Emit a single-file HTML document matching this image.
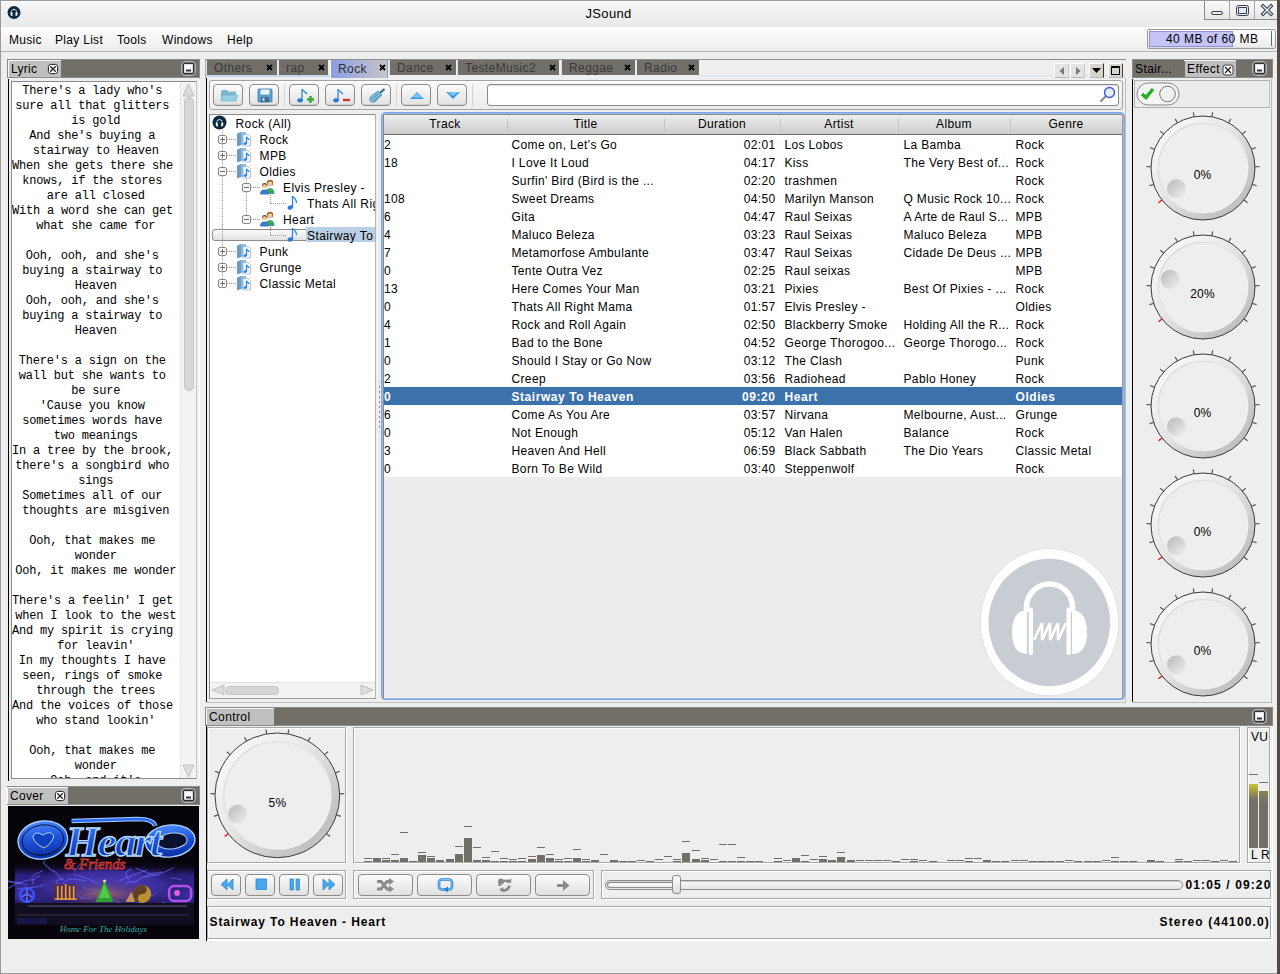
<!DOCTYPE html>
<html><head><meta charset="utf-8">
<style>
*{box-sizing:border-box;margin:0;padding:0}
html,body{width:1280px;height:974px;overflow:hidden;background:#eeeeee;font-family:"Liberation Sans",sans-serif;font-size:12px;color:#000}
.a{position:absolute}
.t{position:absolute;white-space:pre;line-height:14px;letter-spacing:0.35px}
.mono{font-family:"Liberation Mono",monospace}
svg{position:absolute;overflow:visible}
</style></head>
<body>
<div class="a" style="left:0px;top:0px;width:1277px;height:974px;background:#eeeeee;border-left:1px solid #9a9a9a;border-top:1px solid #9a9a9a;border-bottom:1px solid #9a9a9a"></div>
<div class="a" style="left:1277px;top:0px;width:3px;height:974px;background:#554a40"></div>
<div class="a" style="left:1px;top:1px;width:1276px;height:26px;background:linear-gradient(#f6f6f6,#e9e9e9);border-top:1px solid #fff"></div>
<div class="t" style="left:585.5px;top:6px;font-size:13px;letter-spacing:0.35px;line-height:16px">JSound</div>
<div class="a" style="left:1204px;top:0px;width:73px;height:20px;background:linear-gradient(#fafafa,#e6e6e6);border:1px solid #8c8c8c;border-top:1px solid #9a9a9a;border-right:none"></div>
<div class="a" style="left:1229px;top:0px;width:1px;height:19px;background:#a8a8a8"></div>
<div class="a" style="left:1254px;top:0px;width:1px;height:19px;background:#a8a8a8"></div>
<div class="a" style="left:1211px;top:11px;width:12px;height:4px;border:1px solid #3c4450;border-radius:2px;background:#e4eaf6"></div>
<svg style="left:1236px;top:5px" width="13" height="11"><rect x="0.5" y="0.5" width="12" height="10" rx="2" fill="#e4eaf6" stroke="#3c4450" stroke-width="1"/><rect x="2.5" y="2.5" width="8" height="6" fill="#e4eaf6" stroke="#3c4450" stroke-width="1"/></svg>
<svg style="left:1260px;top:3px" width="14" height="14"><path d="M3 3 L11 11 M11 3 L3 11" stroke="#3c4450" stroke-width="3.6" stroke-linecap="square"/><path d="M3 3 L11 11 M11 3 L3 11" stroke="#e4eaf6" stroke-width="1.4" stroke-linecap="square"/></svg>
<svg style="left:7px;top:5px" width="14" height="15"><circle cx="7" cy="7.5" r="6.5" fill="#0d2a44"/><path d="M3.5 9.5 Q3 6.5 5 6.5 Q5.8 8 5.5 11 Q3.8 11 3.5 9.5Z M10.5 9.5 Q11 6.5 9 6.5 Q8.2 8 8.5 11 Q10.2 11 10.5 9.5Z" fill="#fff"/><path d="M4.5 6 Q7 2.5 9.5 6" stroke="#fff" stroke-width="1" fill="none"/></svg>
<div class="a" style="left:1px;top:27px;width:1276px;height:25px;background:linear-gradient(#fcfcfc,#ededed);border-top:1px solid #fff;border-bottom:1px solid #b4b4b4"></div>
<div class="t" style="left:9px;top:33px;letter-spacing:0.3px">Music</div>
<div class="t" style="left:55px;top:33px;letter-spacing:0.3px">Play List</div>
<div class="t" style="left:117px;top:33px;letter-spacing:0.3px">Tools</div>
<div class="t" style="left:162px;top:33px;letter-spacing:0.3px">Windows</div>
<div class="t" style="left:227px;top:33px;letter-spacing:0.3px">Help</div>
<div class="a" style="left:1147px;top:29px;width:129px;height:20px;background:linear-gradient(#fdfdfd,#ececec);border:1px solid #9a9a9a;border-radius:2px;box-shadow:inset 0 -1px 0 #ddd"></div>
<div class="a" style="left:1149px;top:31px;width:84px;height:16px;background:#c4c4f6;border:1px solid #9090e0"></div>
<div class="a" style="left:1271px;top:31px;width:1px;height:15px;background:#666"></div>
<div class="t" style="left:1166px;top:32px;letter-spacing:0.45px">40 MB of 60 MB</div>
<div class="a" style="left:7px;top:59px;width:193px;height:19px;background:#726f68;border:1px solid #8a8a8a;border-bottom:1px solid #8c8c8c"></div>
<div class="a" style="left:8px;top:60px;width:53px;height:1px;background:#f8f8f8"></div>
<div class="a" style="left:8px;top:60px;width:1px;height:17px;background:#f8f8f8"></div>
<div class="a" style="left:9px;top:61px;width:52px;height:16px;background:#c0c0c0"></div>
<div class="t" style="left:11px;top:62px;letter-spacing:0.3px">Lyric</div>
<svg style="left:47px;top:63px" width="12" height="12"><circle cx="6" cy="6" r="5.5" fill="#e8e8e8" stroke="#999" stroke-width="0.8"/><rect x="1.5" y="1.5" width="9" height="9" rx="2" fill="#fff" stroke="#333" stroke-width="1"/><path d="M3.2 3.2 L8.8 8.8 M8.8 3.2 L3.2 8.8" stroke="#222" stroke-width="1.3"/></svg>
<svg style="left:181px;top:61px" width="15" height="15"><rect x="0.5" y="0.5" width="14" height="14" rx="4" fill="#8a877f" stroke="#b8b6b0" stroke-width="1"/><rect x="2.5" y="2.5" width="10" height="10" rx="1" fill="#fff" stroke="#2c303c" stroke-width="1.3"/><rect x="3" y="3" width="9" height="1" fill="#d8dce4"/><rect x="5" y="8.5" width="5" height="2" fill="#2c303c"/></svg>
<div class="a" style="left:8px;top:79px;width:192px;height:702px;border-left:1px solid #000;background:#eeeeee"></div>
<div class="a" style="left:10px;top:80px;width:190px;height:701px;border-right:1px solid #fff"></div>
<div class="a" style="left:11px;top:81px;width:186px;height:698px;border:1px solid #8c8c8c;border-right:1px solid #c8c8c8;background:#fff"></div>
<div class="a" style="left:180px;top:82px;width:16px;height:696px;background:#f3f3f3;border-left:1px solid #e4e4e4"></div>
<svg style="left:182px;top:83px" width="13" height="14"><path d="M6.5 1 L12 13 L1 13 Z" fill="#dcdcdc" stroke="#c0c0c0" stroke-width="1"/></svg>
<div class="a" style="left:184px;top:97px;width:10px;height:294px;background:#d6d6d6;border:1px solid #c4c4c4;border-radius:5px"></div>
<svg style="left:182px;top:764px" width="13" height="14"><path d="M6.5 13 L12 1 L1 1 Z" fill="#dcdcdc" stroke="#c0c0c0" stroke-width="1"/></svg>
<div class="a mono" style="left:12px;top:82px;width:168px;height:696px;overflow:hidden;font-size:12px;line-height:15px;letter-spacing:-0.2px"><div style="position:absolute;left:0;top:2px"><div style="position:absolute;left:0;top:0px;width:167.5px;text-align:center;white-space:pre">There's a lady who's </div><div style="position:absolute;left:0;top:15px;width:167.5px;text-align:center;white-space:pre">sure all that glitters </div><div style="position:absolute;left:0;top:30px;width:167.5px;text-align:center;white-space:pre">is gold</div><div style="position:absolute;left:0;top:45px;width:167.5px;text-align:center;white-space:pre">And she's buying a </div><div style="position:absolute;left:0;top:60px;width:167.5px;text-align:center;white-space:pre">stairway to Heaven</div><div style="position:absolute;left:0;top:75px;width:167.5px;text-align:center;white-space:pre">When she gets there she </div><div style="position:absolute;left:0;top:90px;width:167.5px;text-align:center;white-space:pre">knows, if the stores </div><div style="position:absolute;left:0;top:105px;width:167.5px;text-align:center;white-space:pre">are all closed</div><div style="position:absolute;left:0;top:120px;width:167.5px;text-align:center;white-space:pre">With a word she can get </div><div style="position:absolute;left:0;top:135px;width:167.5px;text-align:center;white-space:pre">what she came for</div><div style="position:absolute;left:0;top:150px;width:167.5px;text-align:center;white-space:pre"></div><div style="position:absolute;left:0;top:165px;width:167.5px;text-align:center;white-space:pre">Ooh, ooh, and she's </div><div style="position:absolute;left:0;top:180px;width:167.5px;text-align:center;white-space:pre">buying a stairway to </div><div style="position:absolute;left:0;top:195px;width:167.5px;text-align:center;white-space:pre">Heaven</div><div style="position:absolute;left:0;top:210px;width:167.5px;text-align:center;white-space:pre">Ooh, ooh, and she's </div><div style="position:absolute;left:0;top:225px;width:167.5px;text-align:center;white-space:pre">buying a stairway to </div><div style="position:absolute;left:0;top:240px;width:167.5px;text-align:center;white-space:pre">Heaven</div><div style="position:absolute;left:0;top:255px;width:167.5px;text-align:center;white-space:pre"></div><div style="position:absolute;left:0;top:270px;width:167.5px;text-align:center;white-space:pre">There's a sign on the </div><div style="position:absolute;left:0;top:285px;width:167.5px;text-align:center;white-space:pre">wall but she wants to </div><div style="position:absolute;left:0;top:300px;width:167.5px;text-align:center;white-space:pre">be sure</div><div style="position:absolute;left:0;top:315px;width:167.5px;text-align:center;white-space:pre">'Cause you know </div><div style="position:absolute;left:0;top:330px;width:167.5px;text-align:center;white-space:pre">sometimes words have </div><div style="position:absolute;left:0;top:345px;width:167.5px;text-align:center;white-space:pre">two meanings</div><div style="position:absolute;left:0;top:360px;width:167.5px;text-align:center;white-space:pre">In a tree by the brook, </div><div style="position:absolute;left:0;top:375px;width:167.5px;text-align:center;white-space:pre">there's a songbird who </div><div style="position:absolute;left:0;top:390px;width:167.5px;text-align:center;white-space:pre">sings</div><div style="position:absolute;left:0;top:405px;width:167.5px;text-align:center;white-space:pre">Sometimes all of our </div><div style="position:absolute;left:0;top:420px;width:167.5px;text-align:center;white-space:pre">thoughts are misgiven</div><div style="position:absolute;left:0;top:435px;width:167.5px;text-align:center;white-space:pre"></div><div style="position:absolute;left:0;top:450px;width:167.5px;text-align:center;white-space:pre">Ooh, that makes me </div><div style="position:absolute;left:0;top:465px;width:167.5px;text-align:center;white-space:pre">wonder</div><div style="position:absolute;left:0;top:480px;width:167.5px;text-align:center;white-space:pre">Ooh, it makes me wonder</div><div style="position:absolute;left:0;top:495px;width:167.5px;text-align:center;white-space:pre"></div><div style="position:absolute;left:0;top:510px;width:167.5px;text-align:center;white-space:pre">There's a feelin' I get </div><div style="position:absolute;left:0;top:525px;width:167.5px;text-align:center;white-space:pre">when I look to the west</div><div style="position:absolute;left:0;top:540px;width:167.5px;text-align:center;white-space:pre">And my spirit is crying </div><div style="position:absolute;left:0;top:555px;width:167.5px;text-align:center;white-space:pre">for leavin'</div><div style="position:absolute;left:0;top:570px;width:167.5px;text-align:center;white-space:pre">In my thoughts I have </div><div style="position:absolute;left:0;top:585px;width:167.5px;text-align:center;white-space:pre">seen, rings of smoke </div><div style="position:absolute;left:0;top:600px;width:167.5px;text-align:center;white-space:pre">through the trees</div><div style="position:absolute;left:0;top:615px;width:167.5px;text-align:center;white-space:pre">And the voices of those </div><div style="position:absolute;left:0;top:630px;width:167.5px;text-align:center;white-space:pre">who stand lookin'</div><div style="position:absolute;left:0;top:645px;width:167.5px;text-align:center;white-space:pre"></div><div style="position:absolute;left:0;top:660px;width:167.5px;text-align:center;white-space:pre">Ooh, that makes me </div><div style="position:absolute;left:0;top:675px;width:167.5px;text-align:center;white-space:pre">wonder</div><div style="position:absolute;left:0;top:690px;width:167.5px;text-align:center;white-space:pre">Ooh, and it's</div></div></div>
<div class="a" style="left:7px;top:786px;width:193px;height:19px;background:#726f68;border:1px solid #8a8a8a;border-bottom:1px solid #8c8c8c"></div>
<div class="a" style="left:7px;top:787px;width:61px;height:1px;background:#f8f8f8"></div>
<div class="a" style="left:7px;top:787px;width:1px;height:17px;background:#f8f8f8"></div>
<div class="a" style="left:8px;top:788px;width:60px;height:16px;background:#c0c0c0"></div>
<div class="t" style="left:10px;top:789px;letter-spacing:0.3px">Cover</div>
<svg style="left:54px;top:790px" width="12" height="12"><circle cx="6" cy="6" r="5.5" fill="#e8e8e8" stroke="#999" stroke-width="0.8"/><rect x="1.5" y="1.5" width="9" height="9" rx="2" fill="#fff" stroke="#333" stroke-width="1"/><path d="M3.2 3.2 L8.8 8.8 M8.8 3.2 L3.2 8.8" stroke="#222" stroke-width="1.3"/></svg>
<svg style="left:181px;top:788px" width="15" height="15"><rect x="0.5" y="0.5" width="14" height="14" rx="4" fill="#8a877f" stroke="#b8b6b0" stroke-width="1"/><rect x="2.5" y="2.5" width="10" height="10" rx="1" fill="#fff" stroke="#2c303c" stroke-width="1.3"/><rect x="3" y="3" width="9" height="1" fill="#d8dce4"/><rect x="5" y="8.5" width="5" height="2" fill="#2c303c"/></svg>
<div class="a" style="left:8px;top:805px;width:192px;height:135px;border-left:0px solid #000;background:#eeeeee"></div>
<div class="a" style="left:205px;top:59px;width:921px;height:1px;background:#8c8c8c"></div>
<div class="a" style="left:205px;top:60px;width:1px;height:19px;background:#b0b0b0"></div>
<div class="a" style="left:206px;top:60px;width:71px;height:15px;background:#726f68;border-left:1px solid #d8e4f0"></div>
<div class="t" style="left:214px;top:61px;color:#3a3a3a;letter-spacing:0.4px">Others</div>
<svg style="left:266px;top:64px" width="7" height="7"><path d="M1 1 L6 6 M6 1 L1 6" stroke="#000" stroke-width="1.8"/></svg>
<div class="a" style="left:278px;top:60px;width:50px;height:15px;background:#726f68;border-left:1px solid #d8e4f0"></div>
<div class="t" style="left:286px;top:61px;color:#3a3a3a;letter-spacing:0.4px">rap</div>
<svg style="left:318px;top:64px" width="7" height="7"><path d="M1 1 L6 6 M6 1 L1 6" stroke="#000" stroke-width="1.8"/></svg>
<div class="a" style="left:330px;top:60px;width:58px;height:18px;background:linear-gradient(90deg,#8b9de3,#a6b0d8 45%,#c4c4c6);border-left:1px solid #fff;border-right:1px solid #7aa0c8"></div>
<div class="t" style="left:338px;top:62px;color:#303030;letter-spacing:0.4px">Rock</div>
<svg style="left:379px;top:64px" width="7" height="7"><path d="M1 1 L6 6 M6 1 L1 6" stroke="#000" stroke-width="1.8"/></svg>
<div class="a" style="left:389px;top:60px;width:67px;height:15px;background:#726f68;border-left:1px solid #d8e4f0"></div>
<div class="t" style="left:397px;top:61px;color:#3a3a3a;letter-spacing:0.4px">Dance</div>
<svg style="left:445px;top:64px" width="7" height="7"><path d="M1 1 L6 6 M6 1 L1 6" stroke="#000" stroke-width="1.8"/></svg>
<div class="a" style="left:457px;top:60px;width:102px;height:15px;background:#726f68;border-left:1px solid #d8e4f0"></div>
<div class="t" style="left:465px;top:61px;color:#3a3a3a;letter-spacing:0.4px">TesteMusic2</div>
<svg style="left:549px;top:64px" width="7" height="7"><path d="M1 1 L6 6 M6 1 L1 6" stroke="#000" stroke-width="1.8"/></svg>
<div class="a" style="left:561px;top:60px;width:74px;height:15px;background:#726f68;border-left:1px solid #d8e4f0"></div>
<div class="t" style="left:569px;top:61px;color:#3a3a3a;letter-spacing:0.4px">Reggae</div>
<svg style="left:624px;top:64px" width="7" height="7"><path d="M1 1 L6 6 M6 1 L1 6" stroke="#000" stroke-width="1.8"/></svg>
<div class="a" style="left:636px;top:60px;width:63px;height:15px;background:#726f68;border-left:1px solid #d8e4f0"></div>
<div class="t" style="left:644px;top:61px;color:#3a3a3a;letter-spacing:0.4px">Radio</div>
<svg style="left:688px;top:64px" width="7" height="7"><path d="M1 1 L6 6 M6 1 L1 6" stroke="#000" stroke-width="1.8"/></svg>
<div class="a" style="left:699px;top:75px;width:427px;height:2px;background:linear-gradient(#d0dcec,#eef2f8)"></div>
<div class="a" style="left:206px;top:75px;width:124px;height:2px;background:#c8d8ec"></div>
<div class="a" style="left:1054px;top:63px;width:15px;height:15px;background:#e6e4e0;border-top:1px solid #fff;border-left:1px solid #fff;border-right:1px solid #c8c8c8;border-bottom:1px solid #b8b8b8"><svg style="left:4px;top:3px" width="6" height="8"><path d="M5 0 L0.5 4 L5 8Z" fill="#777"/></svg></div>
<div class="a" style="left:1070px;top:63px;width:15px;height:15px;background:#e6e4e0;border-top:1px solid #fff;border-left:1px solid #fff;border-right:1px solid #c8c8c8;border-bottom:1px solid #b8b8b8"><svg style="left:5px;top:3px" width="6" height="8"><path d="M0 0 L4.5 4 L0 8Z" fill="#777"/></svg></div>
<div class="a" style="left:1089px;top:63px;width:15px;height:15px;background:#d8d4cc;border-top:1px solid #fff;border-left:1px solid #fff;border-right:1px solid #333;border-bottom:1px solid #b8b8b8"><svg style="left:2px;top:4px" width="10" height="6"><path d="M0 0 L9 0 L4.5 5Z" fill="#000"/></svg></div>
<div class="a" style="left:1108px;top:63px;width:15px;height:15px;background:#d8d4cc;border-top:1px solid #fff;border-left:1px solid #fff;border-right:1px solid #444;border-bottom:1px solid #b8b8b8"><div class="a" style="left:2px;top:2px;width:9px;height:9px;border:1.5px solid #000;border-top:2.5px solid #000"></div></div>
<div class="a" style="left:206px;top:78px;width:1px;height:624px;background:#000"></div>
<div class="a" style="left:207px;top:78px;width:919px;height:625px;background:#eeeeee;border-right:1px solid #c0c0c0;border-bottom:1px solid #c0c0c0"></div>
<div class="a" style="left:209px;top:80px;width:914px;height:30px;border:1px solid #a4a4a4;border-radius:3px;background:linear-gradient(#f8f8f8,#ececec);box-shadow:inset 1px 1px 0 #fff"></div>
<div class="a" style="left:213px;top:84px;width:30px;height:22px;border:1px solid #8c8c8c;border-radius:4px;background:linear-gradient(#fbfbfb,#e2e2e2);box-shadow:inset 0 -1px 0 #d0d0d0"><svg style="left:6px;top:4px" width="18" height="13"><path d="M1 2.5 Q1 1 2.5 1 L7 1 L8.5 2.5 L15 2.5 Q16 2.5 16 3.5 L16 12 L1 12Z" fill="#7ab8d0"/><path d="M2.5 6 L17.5 6 L16 12 L1 12Z" fill="#98d0e4" stroke="#6aaac4" stroke-width="0.6"/></svg></div>
<div class="a" style="left:249px;top:84px;width:30px;height:22px;border:1px solid #8c8c8c;border-radius:4px;background:linear-gradient(#fbfbfb,#e2e2e2);box-shadow:inset 0 -1px 0 #d0d0d0"><svg style="left:7px;top:3px" width="16" height="15"><rect x="1" y="1" width="14" height="13" rx="1" fill="#5aa0cc" stroke="#3a78a8" stroke-width="0.8"/><rect x="3.5" y="1.5" width="9" height="5" fill="#e8f2f8"/><rect x="4" y="9" width="8" height="5" fill="#3a6e98"/><rect x="5.5" y="10" width="2" height="3" fill="#c8dcec"/></svg></div>
<div class="a" style="left:284px;top:84px;width:1px;height:22px;background:#d4d4d4"></div>
<div class="a" style="left:289px;top:84px;width:30px;height:22px;border:1px solid #8c8c8c;border-radius:4px;background:linear-gradient(#fbfbfb,#e2e2e2);box-shadow:inset 0 -1px 0 #d0d0d0"><svg style="left:7px;top:3px" width="20" height="16"><path d="M5 1.5 Q8 4 10 6" stroke="#3a8ee0" stroke-width="1.6" fill="none"/><line x1="5" y1="1" x2="5" y2="12" stroke="#3a8ee0" stroke-width="1.4"/><ellipse cx="3" cy="12.3" rx="2.8" ry="2.1" fill="#2a78d0"/><path d="M13.5 8 L13.5 15 M10 11.5 L17 11.5" stroke="#2cae2c" stroke-width="2.4"/></svg></div>
<div class="a" style="left:325px;top:84px;width:30px;height:22px;border:1px solid #8c8c8c;border-radius:4px;background:linear-gradient(#fbfbfb,#e2e2e2);box-shadow:inset 0 -1px 0 #d0d0d0"><svg style="left:7px;top:3px" width="20" height="16"><path d="M5 1.5 Q8 4 10 6" stroke="#3a8ee0" stroke-width="1.6" fill="none"/><line x1="5" y1="1" x2="5" y2="12" stroke="#3a8ee0" stroke-width="1.4"/><ellipse cx="3" cy="12.3" rx="2.8" ry="2.1" fill="#2a78d0"/><path d="M10 12 L17 12" stroke="#d83030" stroke-width="2.4"/></svg></div>
<div class="a" style="left:361px;top:84px;width:30px;height:22px;border:1px solid #8c8c8c;border-radius:4px;background:linear-gradient(#fbfbfb,#e2e2e2);box-shadow:inset 0 -1px 0 #d0d0d0"><svg style="left:6px;top:3px" width="18" height="16"><path d="M12 5 L16.5 1" stroke="#3a6a8a" stroke-width="2.2"/><path d="M2 9 L10 3 L14 7 L7 14 Q4 15 2 13Z" fill="#78b8d8" stroke="#4a88aa" stroke-width="0.7"/><path d="M4 11 L10 6 M6 13 L12 7" stroke="#4a88aa" stroke-width="0.7"/></svg></div>
<div class="a" style="left:396px;top:84px;width:1px;height:22px;background:#d4d4d4"></div>
<div class="a" style="left:401px;top:84px;width:30px;height:22px;border:1px solid #8c8c8c;border-radius:4px;background:linear-gradient(#fbfbfb,#e2e2e2);box-shadow:inset 0 -1px 0 #d0d0d0"><svg style="left:7px;top:6px" width="16" height="9"><path d="M1 8 L8 1 L15 8Z" fill="#3a9ae0"/><path d="M3 6.5 L8 2 L13 6.5Z" fill="#7cc4f4"/></svg></div>
<div class="a" style="left:437px;top:84px;width:30px;height:22px;border:1px solid #8c8c8c;border-radius:4px;background:linear-gradient(#fbfbfb,#e2e2e2);box-shadow:inset 0 -1px 0 #d0d0d0"><svg style="left:7px;top:6px" width="16" height="9"><path d="M1 1 L15 1 L8 8Z" fill="#3a9ae0"/><path d="M2.5 1 L13.5 1 L8 5Z" fill="#7cc4f4"/></svg></div>
<div class="a" style="left:472px;top:84px;width:1px;height:22px;background:#d4d4d4"></div>
<div class="a" style="left:487px;top:84px;width:632px;height:22px;border:1px solid #8a8a8a;border-radius:3px;background:#fff;box-shadow:inset 0 1px 1px #ddd"></div>
<svg style="left:1099px;top:86px" width="18" height="18"><line x1="2" y1="15" x2="7" y2="10" stroke="#8a8a8a" stroke-width="2.2" stroke-linecap="round"/><circle cx="10.5" cy="6.5" r="5" fill="#e4eef8" stroke="#3a5ae0" stroke-width="1.4"/></svg>
<div class="a" style="left:209px;top:114px;width:167px;height:585px;border:1px solid #8c8c8c;border-right:1px solid #b4b4b4;border-bottom:1px solid #a0a0a0;background:#fff"></div>
<div class="a" style="left:210px;top:682px;width:165px;height:16px;background:#f3f3f3;border-top:1px solid #e0e0e0"></div>
<svg style="left:211px;top:684px" width="14" height="12"><path d="M1 6 L13 1 L13 11Z" fill="#dcdcdc" stroke="#c0c0c0" stroke-width="1"/></svg>
<div class="a" style="left:225px;top:686px;width:54px;height:9px;background:#d6d6d6;border:1px solid #c4c4c4;border-radius:5px"></div>
<svg style="left:360px;top:684px" width="14" height="12"><path d="M13 6 L1 1 L1 11Z" fill="#dcdcdc" stroke="#c0c0c0" stroke-width="1"/></svg>
<div class="a" style="left:222px;top:130px;width:1px;height:154px;background:repeating-linear-gradient(#9a9a9a 0 1px,transparent 1px 2px)"></div>
<div class="a" style="left:246px;top:178px;width:1px;height:42px;background:repeating-linear-gradient(#9a9a9a 0 1px,transparent 1px 2px)"></div>
<div class="a" style="left:270px;top:195px;width:1px;height:9px;background:repeating-linear-gradient(#9a9a9a 0 1px,transparent 1px 2px)"></div>
<div class="a" style="left:270px;top:227px;width:1px;height:9px;background:repeating-linear-gradient(#9a9a9a 0 1px,transparent 1px 2px)"></div>
<div class="a" style="left:227px;top:139px;width:10px;height:1px;background:repeating-linear-gradient(90deg,#9a9a9a 0 1px,transparent 1px 2px)"></div>
<div class="a" style="left:227px;top:155px;width:10px;height:1px;background:repeating-linear-gradient(90deg,#9a9a9a 0 1px,transparent 1px 2px)"></div>
<div class="a" style="left:227px;top:171px;width:10px;height:1px;background:repeating-linear-gradient(90deg,#9a9a9a 0 1px,transparent 1px 2px)"></div>
<div class="a" style="left:227px;top:251px;width:10px;height:1px;background:repeating-linear-gradient(90deg,#9a9a9a 0 1px,transparent 1px 2px)"></div>
<div class="a" style="left:227px;top:267px;width:10px;height:1px;background:repeating-linear-gradient(90deg,#9a9a9a 0 1px,transparent 1px 2px)"></div>
<div class="a" style="left:227px;top:283px;width:10px;height:1px;background:repeating-linear-gradient(90deg,#9a9a9a 0 1px,transparent 1px 2px)"></div>
<div class="a" style="left:251px;top:187px;width:9px;height:1px;background:repeating-linear-gradient(90deg,#9a9a9a 0 1px,transparent 1px 2px)"></div>
<div class="a" style="left:251px;top:219px;width:9px;height:1px;background:repeating-linear-gradient(90deg,#9a9a9a 0 1px,transparent 1px 2px)"></div>
<div class="a" style="left:271px;top:203px;width:16px;height:1px;background:repeating-linear-gradient(90deg,#9a9a9a 0 1px,transparent 1px 2px)"></div>
<div class="a" style="left:271px;top:235px;width:16px;height:1px;background:repeating-linear-gradient(90deg,#9a9a9a 0 1px,transparent 1px 2px)"></div>
<div class="a" style="left:212px;top:229px;width:110px;height:12px;border:1px solid #8c8c8c;border-radius:3px;background:linear-gradient(#fafafa,#e2e2e2)"></div>
<div class="a" style="left:222px;top:229px;width:1px;height:12px;background:repeating-linear-gradient(#9a9a9a 0 1px,transparent 1px 2px)"></div>
<div class="a" style="left:270px;top:228px;width:1px;height:8px;background:repeating-linear-gradient(#9a9a9a 0 1px,transparent 1px 2px)"></div>
<div class="a" style="left:271px;top:235px;width:16px;height:1px;background:repeating-linear-gradient(90deg,#9a9a9a 0 1px,transparent 1px 2px)"></div>
<div class="a" style="left:306px;top:227px;width:69px;height:15px;background:#b8cfe6"></div>
<svg style="left:218px;top:135px" width="10" height="10" shape-rendering="crispEdges"><rect x="0.5" y="0.5" width="8" height="8" rx="1.5" fill="#f6f6f6" stroke="#8a8a8a" shape-rendering="auto"/><rect x="2" y="4" width="5" height="1" fill="#707070"/><rect x="4" y="2" width="1" height="5" fill="#707070"/></svg>
<svg style="left:218px;top:151px" width="10" height="10" shape-rendering="crispEdges"><rect x="0.5" y="0.5" width="8" height="8" rx="1.5" fill="#f6f6f6" stroke="#8a8a8a" shape-rendering="auto"/><rect x="2" y="4" width="5" height="1" fill="#707070"/><rect x="4" y="2" width="1" height="5" fill="#707070"/></svg>
<svg style="left:218px;top:167px" width="10" height="10" shape-rendering="crispEdges"><rect x="0.5" y="0.5" width="8" height="8" rx="1.5" fill="#f6f6f6" stroke="#8a8a8a" shape-rendering="auto"/><rect x="2" y="4" width="5" height="1" fill="#707070"/></svg>
<svg style="left:218px;top:247px" width="10" height="10" shape-rendering="crispEdges"><rect x="0.5" y="0.5" width="8" height="8" rx="1.5" fill="#f6f6f6" stroke="#8a8a8a" shape-rendering="auto"/><rect x="2" y="4" width="5" height="1" fill="#707070"/><rect x="4" y="2" width="1" height="5" fill="#707070"/></svg>
<svg style="left:218px;top:263px" width="10" height="10" shape-rendering="crispEdges"><rect x="0.5" y="0.5" width="8" height="8" rx="1.5" fill="#f6f6f6" stroke="#8a8a8a" shape-rendering="auto"/><rect x="2" y="4" width="5" height="1" fill="#707070"/><rect x="4" y="2" width="1" height="5" fill="#707070"/></svg>
<svg style="left:218px;top:279px" width="10" height="10" shape-rendering="crispEdges"><rect x="0.5" y="0.5" width="8" height="8" rx="1.5" fill="#f6f6f6" stroke="#8a8a8a" shape-rendering="auto"/><rect x="2" y="4" width="5" height="1" fill="#707070"/><rect x="4" y="2" width="1" height="5" fill="#707070"/></svg>
<svg style="left:242px;top:183px" width="10" height="10" shape-rendering="crispEdges"><rect x="0.5" y="0.5" width="8" height="8" rx="1.5" fill="#f6f6f6" stroke="#8a8a8a" shape-rendering="auto"/><rect x="2" y="4" width="5" height="1" fill="#707070"/></svg>
<svg style="left:242px;top:215px" width="10" height="10" shape-rendering="crispEdges"><rect x="0.5" y="0.5" width="8" height="8" rx="1.5" fill="#f6f6f6" stroke="#8a8a8a" shape-rendering="auto"/><rect x="2" y="4" width="5" height="1" fill="#707070"/></svg>
<svg style="left:236px;top:131px" width="16" height="16"><path d="M1 2.5 L5 1 L5 14 L1 15.5Z" fill="#6a9cc8"/><path d="M5 1 L10 1 L10 14 L5 14Z" fill="#8cbce0"/><path d="M7 3.5 L12.5 3.5 L14.5 5.5 L14.5 15 L7 15Z" fill="#f4f8fc" stroke="#8aa8c0" stroke-width="0.6"/><path d="M10.5 6 L10.5 12.5 M10.5 6 Q12.5 7.5 13 9" stroke="#2a7ae0" stroke-width="1.2" fill="none"/><ellipse cx="9.3" cy="12.6" rx="1.6" ry="1.3" fill="#2a7ae0"/></svg>
<svg style="left:236px;top:147px" width="16" height="16"><path d="M1 2.5 L5 1 L5 14 L1 15.5Z" fill="#6a9cc8"/><path d="M5 1 L10 1 L10 14 L5 14Z" fill="#8cbce0"/><path d="M7 3.5 L12.5 3.5 L14.5 5.5 L14.5 15 L7 15Z" fill="#f4f8fc" stroke="#8aa8c0" stroke-width="0.6"/><path d="M10.5 6 L10.5 12.5 M10.5 6 Q12.5 7.5 13 9" stroke="#2a7ae0" stroke-width="1.2" fill="none"/><ellipse cx="9.3" cy="12.6" rx="1.6" ry="1.3" fill="#2a7ae0"/></svg>
<svg style="left:236px;top:163px" width="16" height="16"><path d="M1 2.5 L5 1 L5 14 L1 15.5Z" fill="#6a9cc8"/><path d="M5 1 L10 1 L10 14 L5 14Z" fill="#8cbce0"/><path d="M7 3.5 L12.5 3.5 L14.5 5.5 L14.5 15 L7 15Z" fill="#f4f8fc" stroke="#8aa8c0" stroke-width="0.6"/><path d="M10.5 6 L10.5 12.5 M10.5 6 Q12.5 7.5 13 9" stroke="#2a7ae0" stroke-width="1.2" fill="none"/><ellipse cx="9.3" cy="12.6" rx="1.6" ry="1.3" fill="#2a7ae0"/></svg>
<svg style="left:236px;top:243px" width="16" height="16"><path d="M1 2.5 L5 1 L5 14 L1 15.5Z" fill="#6a9cc8"/><path d="M5 1 L10 1 L10 14 L5 14Z" fill="#8cbce0"/><path d="M7 3.5 L12.5 3.5 L14.5 5.5 L14.5 15 L7 15Z" fill="#f4f8fc" stroke="#8aa8c0" stroke-width="0.6"/><path d="M10.5 6 L10.5 12.5 M10.5 6 Q12.5 7.5 13 9" stroke="#2a7ae0" stroke-width="1.2" fill="none"/><ellipse cx="9.3" cy="12.6" rx="1.6" ry="1.3" fill="#2a7ae0"/></svg>
<svg style="left:236px;top:259px" width="16" height="16"><path d="M1 2.5 L5 1 L5 14 L1 15.5Z" fill="#6a9cc8"/><path d="M5 1 L10 1 L10 14 L5 14Z" fill="#8cbce0"/><path d="M7 3.5 L12.5 3.5 L14.5 5.5 L14.5 15 L7 15Z" fill="#f4f8fc" stroke="#8aa8c0" stroke-width="0.6"/><path d="M10.5 6 L10.5 12.5 M10.5 6 Q12.5 7.5 13 9" stroke="#2a7ae0" stroke-width="1.2" fill="none"/><ellipse cx="9.3" cy="12.6" rx="1.6" ry="1.3" fill="#2a7ae0"/></svg>
<svg style="left:236px;top:275px" width="16" height="16"><path d="M1 2.5 L5 1 L5 14 L1 15.5Z" fill="#6a9cc8"/><path d="M5 1 L10 1 L10 14 L5 14Z" fill="#8cbce0"/><path d="M7 3.5 L12.5 3.5 L14.5 5.5 L14.5 15 L7 15Z" fill="#f4f8fc" stroke="#8aa8c0" stroke-width="0.6"/><path d="M10.5 6 L10.5 12.5 M10.5 6 Q12.5 7.5 13 9" stroke="#2a7ae0" stroke-width="1.2" fill="none"/><ellipse cx="9.3" cy="12.6" rx="1.6" ry="1.3" fill="#2a7ae0"/></svg>
<svg style="left:259px;top:179px" width="17" height="16"><circle cx="11" cy="4" r="3.2" fill="#a0622a"/><circle cx="11" cy="5" r="2.4" fill="#f0c8a0"/><path d="M6.5 15 Q6.5 9 11 9 Q15.5 9 15.5 15Z" fill="#3aaa5a"/><circle cx="5.5" cy="6.5" r="2.4" fill="#6a4020"/><circle cx="5.5" cy="7.3" r="2" fill="#f0c8a0"/><path d="M1 15.5 Q1 10.5 5.5 10.5 Q10 10.5 10 15.5Z" fill="#3a7ac8"/></svg>
<svg style="left:259px;top:211px" width="17" height="16"><circle cx="11" cy="4" r="3.2" fill="#a0622a"/><circle cx="11" cy="5" r="2.4" fill="#f0c8a0"/><path d="M6.5 15 Q6.5 9 11 9 Q15.5 9 15.5 15Z" fill="#3aaa5a"/><circle cx="5.5" cy="6.5" r="2.4" fill="#6a4020"/><circle cx="5.5" cy="7.3" r="2" fill="#f0c8a0"/><path d="M1 15.5 Q1 10.5 5.5 10.5 Q10 10.5 10 15.5Z" fill="#3a7ac8"/></svg>
<svg style="left:287px;top:195px" width="11" height="16"><path d="M5.5 1 L5.5 12" stroke="#2a8ae0" stroke-width="1.3"/><path d="M5.5 1.5 Q9.5 4 9.5 8" stroke="#2a8ae0" stroke-width="1.3" fill="none"/><ellipse cx="3.3" cy="12.5" rx="2.8" ry="2" fill="#2a7ad8" transform="rotate(-20 3.3 12.5)"/></svg>
<svg style="left:287px;top:227px" width="11" height="16"><path d="M5.5 1 L5.5 12" stroke="#2a8ae0" stroke-width="1.3"/><path d="M5.5 1.5 Q9.5 4 9.5 8" stroke="#2a8ae0" stroke-width="1.3" fill="none"/><ellipse cx="3.3" cy="12.5" rx="2.8" ry="2" fill="#2a7ad8" transform="rotate(-20 3.3 12.5)"/></svg>
<svg style="left:212px;top:115px" width="15" height="15"><circle cx="7.5" cy="7.5" r="7" fill="#0d2a44"/><path d="M3.8 10 Q3.3 7 5.3 7 Q6.1 8.5 5.8 11.5 Q4.1 11.5 3.8 10Z M11.2 10 Q11.7 7 9.7 7 Q8.9 8.5 9.2 11.5 Q10.9 11.5 11.2 10Z" fill="#fff"/><path d="M4.8 6.5 Q7.5 2.5 10.2 6.5" stroke="#fff" stroke-width="1" fill="none"/></svg>
<div class="a" style="left:210px;top:115px;width:165px;height:300px;overflow:hidden">
<div class="t" style="left:25.5px;top:1.5px;letter-spacing:0.4px">Rock (All)</div>
<div class="t" style="left:49.5px;top:17.5px;letter-spacing:0.4px">Rock</div>
<div class="t" style="left:49.5px;top:33.5px;letter-spacing:0.4px">MPB</div>
<div class="t" style="left:49.5px;top:49.5px;letter-spacing:0.4px">Oldies</div>
<div class="t" style="left:73px;top:65.5px;letter-spacing:0.4px">Elvis Presley -</div>
<div class="t" style="left:97px;top:81.5px;letter-spacing:0.4px">Thats All Right Mama</div>
<div class="t" style="left:73px;top:97.5px;letter-spacing:0.4px">Heart</div>
<div class="t" style="left:97px;top:113.5px;letter-spacing:0.4px">Stairway To Heaven</div>
<div class="t" style="left:49.5px;top:129.5px;letter-spacing:0.4px">Punk</div>
<div class="t" style="left:49.5px;top:145.5px;letter-spacing:0.4px">Grunge</div>
<div class="t" style="left:49.5px;top:161.5px;letter-spacing:0.4px">Classic Metal</div>
</div>
<div class="a" style="left:381px;top:112px;width:744px;height:588px;border:1px solid #7aa4e8;border-radius:4px;background:#ececec;box-shadow:inset 1px 1px 0 #9cbcf0, inset -1px -1px 0 #9cbcf0"></div>
<div class="a" style="left:383px;top:114px;width:1px;height:585px;background:#888"></div>
<div class="a" style="left:383px;top:114px;width:739px;height:1px;background:#888"></div>
<div class="a" style="left:1122px;top:114px;width:1px;height:585px;background:#999"></div>
<div class="a" style="left:384px;top:115px;width:738px;height:20px;background:linear-gradient(#eeeeee,#dedede 45%,#cdcdcd);border-bottom:1px solid #707070"></div>
<div class="t" style="left:383px;top:117px;width:124px;text-align:center;letter-spacing:0.35px">Track</div>
<div class="a" style="left:507px;top:119px;width:1px;height:13px;background:#c4c4c4"></div>
<div class="t" style="left:507px;top:117px;width:157px;text-align:center;letter-spacing:0.35px">Title</div>
<div class="a" style="left:664px;top:119px;width:1px;height:13px;background:#c4c4c4"></div>
<div class="t" style="left:664px;top:117px;width:116px;text-align:center;letter-spacing:0.35px">Duration</div>
<div class="a" style="left:780px;top:119px;width:1px;height:13px;background:#c4c4c4"></div>
<div class="t" style="left:780px;top:117px;width:118px;text-align:center;letter-spacing:0.35px">Artist</div>
<div class="a" style="left:898px;top:119px;width:1px;height:13px;background:#c4c4c4"></div>
<div class="t" style="left:898px;top:117px;width:112px;text-align:center;letter-spacing:0.35px">Album</div>
<div class="a" style="left:1010px;top:119px;width:1px;height:13px;background:#c4c4c4"></div>
<div class="t" style="left:1010px;top:117px;width:112px;text-align:center;letter-spacing:0.35px">Genre</div>
<div class="a" style="left:384px;top:135px;width:738px;height:342px;background:#fff"></div>
<div class="t" style="left:384px;top:137.5px;letter-spacing:0.35px">2</div>
<div class="t" style="left:511.5px;top:137.5px;letter-spacing:0.35px">Come on, Let's Go</div>
<div class="t" style="left:700px;top:137.5px;width:75.5px;text-align:right;letter-spacing:0.35px">02:01</div>
<div class="t" style="left:784.5px;top:137.5px;letter-spacing:0.35px">Los Lobos</div>
<div class="t" style="left:903.5px;top:137.5px;letter-spacing:0.35px">La Bamba</div>
<div class="t" style="left:1015.5px;top:137.5px;letter-spacing:0.35px">Rock</div>
<div class="t" style="left:384px;top:155.5px;letter-spacing:0.35px">18</div>
<div class="t" style="left:511.5px;top:155.5px;letter-spacing:0.35px">I Love It Loud</div>
<div class="t" style="left:700px;top:155.5px;width:75.5px;text-align:right;letter-spacing:0.35px">04:17</div>
<div class="t" style="left:784.5px;top:155.5px;letter-spacing:0.35px">Kiss</div>
<div class="t" style="left:903.5px;top:155.5px;letter-spacing:0.35px">The Very Best of...</div>
<div class="t" style="left:1015.5px;top:155.5px;letter-spacing:0.35px">Rock</div>
<div class="t" style="left:384px;top:173.5px;letter-spacing:0.35px"></div>
<div class="t" style="left:511.5px;top:173.5px;letter-spacing:0.35px">Surfin' Bird (Bird is the ...</div>
<div class="t" style="left:700px;top:173.5px;width:75.5px;text-align:right;letter-spacing:0.35px">02:20</div>
<div class="t" style="left:784.5px;top:173.5px;letter-spacing:0.35px">trashmen</div>
<div class="t" style="left:903.5px;top:173.5px;letter-spacing:0.35px"></div>
<div class="t" style="left:1015.5px;top:173.5px;letter-spacing:0.35px">Rock</div>
<div class="t" style="left:384px;top:191.5px;letter-spacing:0.35px">108</div>
<div class="t" style="left:511.5px;top:191.5px;letter-spacing:0.35px">Sweet Dreams</div>
<div class="t" style="left:700px;top:191.5px;width:75.5px;text-align:right;letter-spacing:0.35px">04:50</div>
<div class="t" style="left:784.5px;top:191.5px;letter-spacing:0.35px">Marilyn Manson</div>
<div class="t" style="left:903.5px;top:191.5px;letter-spacing:0.35px">Q Music Rock 10...</div>
<div class="t" style="left:1015.5px;top:191.5px;letter-spacing:0.35px">Rock</div>
<div class="t" style="left:384px;top:209.5px;letter-spacing:0.35px">6</div>
<div class="t" style="left:511.5px;top:209.5px;letter-spacing:0.35px">Gita</div>
<div class="t" style="left:700px;top:209.5px;width:75.5px;text-align:right;letter-spacing:0.35px">04:47</div>
<div class="t" style="left:784.5px;top:209.5px;letter-spacing:0.35px">Raul Seixas</div>
<div class="t" style="left:903.5px;top:209.5px;letter-spacing:0.35px">A Arte de Raul S...</div>
<div class="t" style="left:1015.5px;top:209.5px;letter-spacing:0.35px">MPB</div>
<div class="t" style="left:384px;top:227.5px;letter-spacing:0.35px">4</div>
<div class="t" style="left:511.5px;top:227.5px;letter-spacing:0.35px">Maluco Beleza</div>
<div class="t" style="left:700px;top:227.5px;width:75.5px;text-align:right;letter-spacing:0.35px">03:23</div>
<div class="t" style="left:784.5px;top:227.5px;letter-spacing:0.35px">Raul Seixas</div>
<div class="t" style="left:903.5px;top:227.5px;letter-spacing:0.35px">Maluco Beleza</div>
<div class="t" style="left:1015.5px;top:227.5px;letter-spacing:0.35px">MPB</div>
<div class="t" style="left:384px;top:245.5px;letter-spacing:0.35px">7</div>
<div class="t" style="left:511.5px;top:245.5px;letter-spacing:0.35px">Metamorfose Ambulante</div>
<div class="t" style="left:700px;top:245.5px;width:75.5px;text-align:right;letter-spacing:0.35px">03:47</div>
<div class="t" style="left:784.5px;top:245.5px;letter-spacing:0.35px">Raul Seixas</div>
<div class="t" style="left:903.5px;top:245.5px;letter-spacing:0.35px">Cidade De Deus ...</div>
<div class="t" style="left:1015.5px;top:245.5px;letter-spacing:0.35px">MPB</div>
<div class="t" style="left:384px;top:263.5px;letter-spacing:0.35px">0</div>
<div class="t" style="left:511.5px;top:263.5px;letter-spacing:0.35px">Tente Outra Vez</div>
<div class="t" style="left:700px;top:263.5px;width:75.5px;text-align:right;letter-spacing:0.35px">02:25</div>
<div class="t" style="left:784.5px;top:263.5px;letter-spacing:0.35px">Raul seixas</div>
<div class="t" style="left:903.5px;top:263.5px;letter-spacing:0.35px"></div>
<div class="t" style="left:1015.5px;top:263.5px;letter-spacing:0.35px">MPB</div>
<div class="t" style="left:384px;top:281.5px;letter-spacing:0.35px">13</div>
<div class="t" style="left:511.5px;top:281.5px;letter-spacing:0.35px">Here Comes Your Man</div>
<div class="t" style="left:700px;top:281.5px;width:75.5px;text-align:right;letter-spacing:0.35px">03:21</div>
<div class="t" style="left:784.5px;top:281.5px;letter-spacing:0.35px">Pixies</div>
<div class="t" style="left:903.5px;top:281.5px;letter-spacing:0.35px">Best Of Pixies - ...</div>
<div class="t" style="left:1015.5px;top:281.5px;letter-spacing:0.35px">Rock</div>
<div class="t" style="left:384px;top:299.5px;letter-spacing:0.35px">0</div>
<div class="t" style="left:511.5px;top:299.5px;letter-spacing:0.35px">Thats All Right Mama</div>
<div class="t" style="left:700px;top:299.5px;width:75.5px;text-align:right;letter-spacing:0.35px">01:57</div>
<div class="t" style="left:784.5px;top:299.5px;letter-spacing:0.35px">Elvis Presley -</div>
<div class="t" style="left:903.5px;top:299.5px;letter-spacing:0.35px"></div>
<div class="t" style="left:1015.5px;top:299.5px;letter-spacing:0.35px">Oldies</div>
<div class="t" style="left:384px;top:317.5px;letter-spacing:0.35px">4</div>
<div class="t" style="left:511.5px;top:317.5px;letter-spacing:0.35px">Rock and Roll Again</div>
<div class="t" style="left:700px;top:317.5px;width:75.5px;text-align:right;letter-spacing:0.35px">02:50</div>
<div class="t" style="left:784.5px;top:317.5px;letter-spacing:0.35px">Blackberry Smoke</div>
<div class="t" style="left:903.5px;top:317.5px;letter-spacing:0.35px">Holding All the R...</div>
<div class="t" style="left:1015.5px;top:317.5px;letter-spacing:0.35px">Rock</div>
<div class="t" style="left:384px;top:335.5px;letter-spacing:0.35px">1</div>
<div class="t" style="left:511.5px;top:335.5px;letter-spacing:0.35px">Bad to the Bone</div>
<div class="t" style="left:700px;top:335.5px;width:75.5px;text-align:right;letter-spacing:0.35px">04:52</div>
<div class="t" style="left:784.5px;top:335.5px;letter-spacing:0.35px">George Thorogoo...</div>
<div class="t" style="left:903.5px;top:335.5px;letter-spacing:0.35px">George Thorogo...</div>
<div class="t" style="left:1015.5px;top:335.5px;letter-spacing:0.35px">Rock</div>
<div class="t" style="left:384px;top:353.5px;letter-spacing:0.35px">0</div>
<div class="t" style="left:511.5px;top:353.5px;letter-spacing:0.35px">Should I Stay or Go Now</div>
<div class="t" style="left:700px;top:353.5px;width:75.5px;text-align:right;letter-spacing:0.35px">03:12</div>
<div class="t" style="left:784.5px;top:353.5px;letter-spacing:0.35px">The Clash</div>
<div class="t" style="left:903.5px;top:353.5px;letter-spacing:0.35px"></div>
<div class="t" style="left:1015.5px;top:353.5px;letter-spacing:0.35px">Punk</div>
<div class="t" style="left:384px;top:371.5px;letter-spacing:0.35px">2</div>
<div class="t" style="left:511.5px;top:371.5px;letter-spacing:0.35px">Creep</div>
<div class="t" style="left:700px;top:371.5px;width:75.5px;text-align:right;letter-spacing:0.35px">03:56</div>
<div class="t" style="left:784.5px;top:371.5px;letter-spacing:0.35px">Radiohead</div>
<div class="t" style="left:903.5px;top:371.5px;letter-spacing:0.35px">Pablo Honey</div>
<div class="t" style="left:1015.5px;top:371.5px;letter-spacing:0.35px">Rock</div>
<div class="a" style="left:384px;top:387px;width:738px;height:18px;background:#3b72ab"></div>
<div class="t" style="left:384px;top:389.5px;color:#fff;font-weight:bold;letter-spacing:0.55px">0</div>
<div class="t" style="left:511.5px;top:389.5px;color:#fff;font-weight:bold;letter-spacing:0.55px">Stairway To Heaven</div>
<div class="t" style="left:700px;top:389.5px;width:75.5px;text-align:right;color:#fff;font-weight:bold;letter-spacing:0.55px">09:20</div>
<div class="t" style="left:784.5px;top:389.5px;color:#fff;font-weight:bold;letter-spacing:0.55px">Heart</div>
<div class="t" style="left:903.5px;top:389.5px;color:#fff;font-weight:bold;letter-spacing:0.55px"></div>
<div class="t" style="left:1015.5px;top:389.5px;color:#fff;font-weight:bold;letter-spacing:0.55px">Oldies</div>
<div class="t" style="left:384px;top:407.5px;letter-spacing:0.35px">6</div>
<div class="t" style="left:511.5px;top:407.5px;letter-spacing:0.35px">Come As You Are</div>
<div class="t" style="left:700px;top:407.5px;width:75.5px;text-align:right;letter-spacing:0.35px">03:57</div>
<div class="t" style="left:784.5px;top:407.5px;letter-spacing:0.35px">Nirvana</div>
<div class="t" style="left:903.5px;top:407.5px;letter-spacing:0.35px">Melbourne, Aust...</div>
<div class="t" style="left:1015.5px;top:407.5px;letter-spacing:0.35px">Grunge</div>
<div class="t" style="left:384px;top:425.5px;letter-spacing:0.35px">0</div>
<div class="t" style="left:511.5px;top:425.5px;letter-spacing:0.35px">Not Enough</div>
<div class="t" style="left:700px;top:425.5px;width:75.5px;text-align:right;letter-spacing:0.35px">05:12</div>
<div class="t" style="left:784.5px;top:425.5px;letter-spacing:0.35px">Van Halen</div>
<div class="t" style="left:903.5px;top:425.5px;letter-spacing:0.35px">Balance</div>
<div class="t" style="left:1015.5px;top:425.5px;letter-spacing:0.35px">Rock</div>
<div class="t" style="left:384px;top:443.5px;letter-spacing:0.35px">3</div>
<div class="t" style="left:511.5px;top:443.5px;letter-spacing:0.35px">Heaven And Hell</div>
<div class="t" style="left:700px;top:443.5px;width:75.5px;text-align:right;letter-spacing:0.35px">06:59</div>
<div class="t" style="left:784.5px;top:443.5px;letter-spacing:0.35px">Black Sabbath</div>
<div class="t" style="left:903.5px;top:443.5px;letter-spacing:0.35px">The Dio Years</div>
<div class="t" style="left:1015.5px;top:443.5px;letter-spacing:0.35px">Classic Metal</div>
<div class="t" style="left:384px;top:461.5px;letter-spacing:0.35px">0</div>
<div class="t" style="left:511.5px;top:461.5px;letter-spacing:0.35px">Born To Be Wild</div>
<div class="t" style="left:700px;top:461.5px;width:75.5px;text-align:right;letter-spacing:0.35px">03:40</div>
<div class="t" style="left:784.5px;top:461.5px;letter-spacing:0.35px">Steppenwolf</div>
<div class="t" style="left:903.5px;top:461.5px;letter-spacing:0.35px"></div>
<div class="t" style="left:1015.5px;top:461.5px;letter-spacing:0.35px">Rock</div>
<svg style="left:970px;top:540px" width="160" height="160" viewBox="970 540 160 160">
<ellipse cx="1049.5" cy="622.1" rx="69.3" ry="73.6" fill="#fff" stroke="#d4dcea" stroke-width="0.8"/>
<ellipse cx="1049.3" cy="622.5" rx="60.8" ry="63.7" fill="#c8cdd3"/>
<path d="M1026.5 612 L1026.5 607 A23 23 0 0 1 1072.5 607 L1072.5 612" stroke="#fff" stroke-width="5.5" fill="none"/>
<path d="M1027 610 Q1012 611 1012 632 Q1012 654 1027 654 Z" fill="#fff"/>
<path d="M1072 610 Q1087 611 1087 632 Q1087 654 1072 654 Z" fill="#fff"/>
<rect x="1028.7" y="607.5" width="4.3" height="47.5" rx="2" fill="#fff"/>
<rect x="1066.5" y="607.5" width="4.3" height="47.5" rx="2" fill="#fff"/>
<path d="M1034 640 L1042 623 L1042 640 L1050 623 L1050 640 L1058 623 L1058 640 L1066 623" stroke="#fff" stroke-width="2.6" fill="none" stroke-linejoin="bevel"/>
</svg>
<div class="a" style="left:1132px;top:59px;width:141px;height:19px;background:#726f68;border:1px solid #8a8a8a"></div>
<div class="a" style="left:1184px;top:60px;width:52px;height:1px;background:#f8f8f8"></div>
<div class="t" style="left:1135px;top:62px;letter-spacing:0.4px">Stair...</div>
<div class="a" style="left:1185px;top:61px;width:51px;height:16px;background:#c0c0c0"></div>
<div class="t" style="left:1187px;top:62px;letter-spacing:0.4px">Effect</div>
<svg style="left:1221px;top:63px" width="14" height="14"><circle cx="7" cy="7" r="6.5" fill="#e0e0e0" stroke="#aaa" stroke-width="0.8"/><rect x="2" y="2" width="10" height="10" rx="2.5" fill="#fff" stroke="#333" stroke-width="1"/><path d="M4 4 L10 10 M10 4 L4 10" stroke="#222" stroke-width="1.3"/></svg>
<svg style="left:1252px;top:61px" width="15" height="15"><rect x="0.5" y="0.5" width="14" height="14" rx="4" fill="#8a877f" stroke="#b8b6b0" stroke-width="1"/><rect x="2.5" y="2.5" width="10" height="10" rx="1" fill="#fff" stroke="#2c303c" stroke-width="1.3"/><rect x="3" y="3" width="9" height="1" fill="#d8dce4"/><rect x="5" y="8.5" width="5" height="2" fill="#2c303c"/></svg>
<div class="a" style="left:1132px;top:79px;width:1px;height:623px;background:#000"></div>
<div class="a" style="left:1133px;top:79px;width:139px;height:624px;background:#eeeeee;border-right:1px solid #b8b8b8;border-bottom:1px solid #b8b8b8"></div>
<div class="a" style="left:1134px;top:80px;width:136px;height:28px;border:1px solid #b0b0b0;border-right:1px solid #c0c0c0;background:#ececec"></div>
<svg style="left:1136px;top:82px" width="45" height="25"><rect x="1" y="1" width="42" height="22" rx="11" fill="#f4f4f4" stroke="#888" stroke-width="1"/><circle cx="31.5" cy="12" r="7.8" fill="#f0f0f0" stroke="#777" stroke-width="1"/><path d="M6 12 L10 15.5 L17 7" stroke="#22b022" stroke-width="3.4" fill="none"/></svg>
<svg style="left:1142.5px;top:107.5px" width="120" height="120" viewBox="0 0 120 120"><defs><linearGradient id="kg1202167" x1="0" y1="0" x2="1" y2="1"><stop offset="0" stop-color="#ffffff"/><stop offset="0.42" stop-color="#e8e8e8"/><stop offset="0.75" stop-color="#c8c8c8"/><stop offset="1" stop-color="#b4b4b4"/></linearGradient><linearGradient id="ks1202167" x1="0" y1="0" x2="1" y2="1"><stop offset="0" stop-color="#d4d4d4"/><stop offset="1" stop-color="#fafafa"/></linearGradient><linearGradient id="kd1202167" x1="0" y1="0" x2="1" y2="1"><stop offset="0" stop-color="#b8b8b8"/><stop offset="1" stop-color="#f0f0f0"/></linearGradient></defs><line x1="19.02" y1="92.01" x2="15.48" y2="94.78" stroke="#ff0000" stroke-width="1.2"/><line x1="10.63" y1="76.33" x2="6.36" y2="77.75" stroke="#555" stroke-width="1.2"/><line x1="8.02" y1="58.74" x2="3.52" y2="58.63" stroke="#555" stroke-width="1.2"/><line x1="11.48" y1="41.30" x2="7.28" y2="39.68" stroke="#555" stroke-width="1.2"/><line x1="20.62" y1="26.04" x2="17.21" y2="23.10" stroke="#555" stroke-width="1.2"/><line x1="34.36" y1="14.76" x2="32.15" y2="10.84" stroke="#555" stroke-width="1.2"/><line x1="51.11" y1="8.77" x2="50.34" y2="4.33" stroke="#555" stroke-width="1.2"/><line x1="68.89" y1="8.77" x2="69.66" y2="4.33" stroke="#555" stroke-width="1.2"/><line x1="85.64" y1="14.76" x2="87.85" y2="10.84" stroke="#555" stroke-width="1.2"/><line x1="99.38" y1="26.04" x2="102.79" y2="23.10" stroke="#555" stroke-width="1.2"/><line x1="108.52" y1="41.30" x2="112.72" y2="39.68" stroke="#555" stroke-width="1.2"/><line x1="111.98" y1="58.74" x2="116.48" y2="58.63" stroke="#555" stroke-width="1.2"/><line x1="109.37" y1="76.33" x2="113.64" y2="77.75" stroke="#555" stroke-width="1.2"/><line x1="100.98" y1="92.01" x2="104.52" y2="94.78" stroke="#555" stroke-width="1.2"/><circle cx="60" cy="60" r="52" fill="url(#kg1202167)" stroke="#3a3a3a" stroke-width="1"/><circle cx="60" cy="60" r="44.72" fill="#eeeeee" stroke="url(#ks1202167)" stroke-width="1.2"/><circle cx="33.44" cy="80.75" r="9.5" fill="url(#kd1202167)"/></svg>
<div class="t" style="left:1172.5px;top:168.0px;width:60px;text-align:center;letter-spacing:0.2px">0%</div>
<svg style="left:1142.5px;top:226.5px" width="120" height="120" viewBox="0 0 120 120"><defs><linearGradient id="kg1202286" x1="0" y1="0" x2="1" y2="1"><stop offset="0" stop-color="#ffffff"/><stop offset="0.42" stop-color="#e8e8e8"/><stop offset="0.75" stop-color="#c8c8c8"/><stop offset="1" stop-color="#b4b4b4"/></linearGradient><linearGradient id="ks1202286" x1="0" y1="0" x2="1" y2="1"><stop offset="0" stop-color="#d4d4d4"/><stop offset="1" stop-color="#fafafa"/></linearGradient><linearGradient id="kd1202286" x1="0" y1="0" x2="1" y2="1"><stop offset="0" stop-color="#b8b8b8"/><stop offset="1" stop-color="#f0f0f0"/></linearGradient></defs><line x1="19.02" y1="92.01" x2="15.48" y2="94.78" stroke="#ff0000" stroke-width="1.2"/><line x1="10.63" y1="76.33" x2="6.36" y2="77.75" stroke="#555" stroke-width="1.2"/><line x1="8.02" y1="58.74" x2="3.52" y2="58.63" stroke="#555" stroke-width="1.2"/><line x1="11.48" y1="41.30" x2="7.28" y2="39.68" stroke="#555" stroke-width="1.2"/><line x1="20.62" y1="26.04" x2="17.21" y2="23.10" stroke="#555" stroke-width="1.2"/><line x1="34.36" y1="14.76" x2="32.15" y2="10.84" stroke="#555" stroke-width="1.2"/><line x1="51.11" y1="8.77" x2="50.34" y2="4.33" stroke="#555" stroke-width="1.2"/><line x1="68.89" y1="8.77" x2="69.66" y2="4.33" stroke="#555" stroke-width="1.2"/><line x1="85.64" y1="14.76" x2="87.85" y2="10.84" stroke="#555" stroke-width="1.2"/><line x1="99.38" y1="26.04" x2="102.79" y2="23.10" stroke="#555" stroke-width="1.2"/><line x1="108.52" y1="41.30" x2="112.72" y2="39.68" stroke="#555" stroke-width="1.2"/><line x1="111.98" y1="58.74" x2="116.48" y2="58.63" stroke="#555" stroke-width="1.2"/><line x1="109.37" y1="76.33" x2="113.64" y2="77.75" stroke="#555" stroke-width="1.2"/><line x1="100.98" y1="92.01" x2="104.52" y2="94.78" stroke="#555" stroke-width="1.2"/><circle cx="60" cy="60" r="52" fill="url(#kg1202286)" stroke="#3a3a3a" stroke-width="1"/><circle cx="60" cy="60" r="44.72" fill="#eeeeee" stroke="url(#ks1202286)" stroke-width="1.2"/><circle cx="27.19" cy="52.30" r="9.5" fill="url(#kd1202286)"/></svg>
<div class="t" style="left:1172.5px;top:287.0px;width:60px;text-align:center;letter-spacing:0.2px">20%</div>
<svg style="left:1142.5px;top:345.5px" width="120" height="120" viewBox="0 0 120 120"><defs><linearGradient id="kg1202405" x1="0" y1="0" x2="1" y2="1"><stop offset="0" stop-color="#ffffff"/><stop offset="0.42" stop-color="#e8e8e8"/><stop offset="0.75" stop-color="#c8c8c8"/><stop offset="1" stop-color="#b4b4b4"/></linearGradient><linearGradient id="ks1202405" x1="0" y1="0" x2="1" y2="1"><stop offset="0" stop-color="#d4d4d4"/><stop offset="1" stop-color="#fafafa"/></linearGradient><linearGradient id="kd1202405" x1="0" y1="0" x2="1" y2="1"><stop offset="0" stop-color="#b8b8b8"/><stop offset="1" stop-color="#f0f0f0"/></linearGradient></defs><line x1="19.02" y1="92.01" x2="15.48" y2="94.78" stroke="#ff0000" stroke-width="1.2"/><line x1="10.63" y1="76.33" x2="6.36" y2="77.75" stroke="#555" stroke-width="1.2"/><line x1="8.02" y1="58.74" x2="3.52" y2="58.63" stroke="#555" stroke-width="1.2"/><line x1="11.48" y1="41.30" x2="7.28" y2="39.68" stroke="#555" stroke-width="1.2"/><line x1="20.62" y1="26.04" x2="17.21" y2="23.10" stroke="#555" stroke-width="1.2"/><line x1="34.36" y1="14.76" x2="32.15" y2="10.84" stroke="#555" stroke-width="1.2"/><line x1="51.11" y1="8.77" x2="50.34" y2="4.33" stroke="#555" stroke-width="1.2"/><line x1="68.89" y1="8.77" x2="69.66" y2="4.33" stroke="#555" stroke-width="1.2"/><line x1="85.64" y1="14.76" x2="87.85" y2="10.84" stroke="#555" stroke-width="1.2"/><line x1="99.38" y1="26.04" x2="102.79" y2="23.10" stroke="#555" stroke-width="1.2"/><line x1="108.52" y1="41.30" x2="112.72" y2="39.68" stroke="#555" stroke-width="1.2"/><line x1="111.98" y1="58.74" x2="116.48" y2="58.63" stroke="#555" stroke-width="1.2"/><line x1="109.37" y1="76.33" x2="113.64" y2="77.75" stroke="#555" stroke-width="1.2"/><line x1="100.98" y1="92.01" x2="104.52" y2="94.78" stroke="#555" stroke-width="1.2"/><circle cx="60" cy="60" r="52" fill="url(#kg1202405)" stroke="#3a3a3a" stroke-width="1"/><circle cx="60" cy="60" r="44.72" fill="#eeeeee" stroke="url(#ks1202405)" stroke-width="1.2"/><circle cx="33.44" cy="80.75" r="9.5" fill="url(#kd1202405)"/></svg>
<div class="t" style="left:1172.5px;top:406.0px;width:60px;text-align:center;letter-spacing:0.2px">0%</div>
<svg style="left:1142.5px;top:464.5px" width="120" height="120" viewBox="0 0 120 120"><defs><linearGradient id="kg1202524" x1="0" y1="0" x2="1" y2="1"><stop offset="0" stop-color="#ffffff"/><stop offset="0.42" stop-color="#e8e8e8"/><stop offset="0.75" stop-color="#c8c8c8"/><stop offset="1" stop-color="#b4b4b4"/></linearGradient><linearGradient id="ks1202524" x1="0" y1="0" x2="1" y2="1"><stop offset="0" stop-color="#d4d4d4"/><stop offset="1" stop-color="#fafafa"/></linearGradient><linearGradient id="kd1202524" x1="0" y1="0" x2="1" y2="1"><stop offset="0" stop-color="#b8b8b8"/><stop offset="1" stop-color="#f0f0f0"/></linearGradient></defs><line x1="19.02" y1="92.01" x2="15.48" y2="94.78" stroke="#ff0000" stroke-width="1.2"/><line x1="10.63" y1="76.33" x2="6.36" y2="77.75" stroke="#555" stroke-width="1.2"/><line x1="8.02" y1="58.74" x2="3.52" y2="58.63" stroke="#555" stroke-width="1.2"/><line x1="11.48" y1="41.30" x2="7.28" y2="39.68" stroke="#555" stroke-width="1.2"/><line x1="20.62" y1="26.04" x2="17.21" y2="23.10" stroke="#555" stroke-width="1.2"/><line x1="34.36" y1="14.76" x2="32.15" y2="10.84" stroke="#555" stroke-width="1.2"/><line x1="51.11" y1="8.77" x2="50.34" y2="4.33" stroke="#555" stroke-width="1.2"/><line x1="68.89" y1="8.77" x2="69.66" y2="4.33" stroke="#555" stroke-width="1.2"/><line x1="85.64" y1="14.76" x2="87.85" y2="10.84" stroke="#555" stroke-width="1.2"/><line x1="99.38" y1="26.04" x2="102.79" y2="23.10" stroke="#555" stroke-width="1.2"/><line x1="108.52" y1="41.30" x2="112.72" y2="39.68" stroke="#555" stroke-width="1.2"/><line x1="111.98" y1="58.74" x2="116.48" y2="58.63" stroke="#555" stroke-width="1.2"/><line x1="109.37" y1="76.33" x2="113.64" y2="77.75" stroke="#555" stroke-width="1.2"/><line x1="100.98" y1="92.01" x2="104.52" y2="94.78" stroke="#555" stroke-width="1.2"/><circle cx="60" cy="60" r="52" fill="url(#kg1202524)" stroke="#3a3a3a" stroke-width="1"/><circle cx="60" cy="60" r="44.72" fill="#eeeeee" stroke="url(#ks1202524)" stroke-width="1.2"/><circle cx="33.44" cy="80.75" r="9.5" fill="url(#kd1202524)"/></svg>
<div class="t" style="left:1172.5px;top:525.0px;width:60px;text-align:center;letter-spacing:0.2px">0%</div>
<svg style="left:1142.5px;top:583.5px" width="120" height="120" viewBox="0 0 120 120"><defs><linearGradient id="kg1202643" x1="0" y1="0" x2="1" y2="1"><stop offset="0" stop-color="#ffffff"/><stop offset="0.42" stop-color="#e8e8e8"/><stop offset="0.75" stop-color="#c8c8c8"/><stop offset="1" stop-color="#b4b4b4"/></linearGradient><linearGradient id="ks1202643" x1="0" y1="0" x2="1" y2="1"><stop offset="0" stop-color="#d4d4d4"/><stop offset="1" stop-color="#fafafa"/></linearGradient><linearGradient id="kd1202643" x1="0" y1="0" x2="1" y2="1"><stop offset="0" stop-color="#b8b8b8"/><stop offset="1" stop-color="#f0f0f0"/></linearGradient></defs><line x1="19.02" y1="92.01" x2="15.48" y2="94.78" stroke="#ff0000" stroke-width="1.2"/><line x1="10.63" y1="76.33" x2="6.36" y2="77.75" stroke="#555" stroke-width="1.2"/><line x1="8.02" y1="58.74" x2="3.52" y2="58.63" stroke="#555" stroke-width="1.2"/><line x1="11.48" y1="41.30" x2="7.28" y2="39.68" stroke="#555" stroke-width="1.2"/><line x1="20.62" y1="26.04" x2="17.21" y2="23.10" stroke="#555" stroke-width="1.2"/><line x1="34.36" y1="14.76" x2="32.15" y2="10.84" stroke="#555" stroke-width="1.2"/><line x1="51.11" y1="8.77" x2="50.34" y2="4.33" stroke="#555" stroke-width="1.2"/><line x1="68.89" y1="8.77" x2="69.66" y2="4.33" stroke="#555" stroke-width="1.2"/><line x1="85.64" y1="14.76" x2="87.85" y2="10.84" stroke="#555" stroke-width="1.2"/><line x1="99.38" y1="26.04" x2="102.79" y2="23.10" stroke="#555" stroke-width="1.2"/><line x1="108.52" y1="41.30" x2="112.72" y2="39.68" stroke="#555" stroke-width="1.2"/><line x1="111.98" y1="58.74" x2="116.48" y2="58.63" stroke="#555" stroke-width="1.2"/><line x1="109.37" y1="76.33" x2="113.64" y2="77.75" stroke="#555" stroke-width="1.2"/><line x1="100.98" y1="92.01" x2="104.52" y2="94.78" stroke="#555" stroke-width="1.2"/><circle cx="60" cy="60" r="52" fill="url(#kg1202643)" stroke="#3a3a3a" stroke-width="1"/><circle cx="60" cy="60" r="44.72" fill="#eeeeee" stroke="url(#ks1202643)" stroke-width="1.2"/><circle cx="33.44" cy="80.75" r="9.5" fill="url(#kd1202643)"/></svg>
<div class="t" style="left:1172.5px;top:644.0px;width:60px;text-align:center;letter-spacing:0.2px">0%</div>
<div class="a" style="left:205px;top:707px;width:1068px;height:19px;background:#726f68;border:1px solid #8a8a8a"></div>
<div class="a" style="left:206px;top:708px;width:68px;height:1px;background:#f8f8f8"></div>
<div class="a" style="left:206px;top:708px;width:1px;height:17px;background:#f8f8f8"></div>
<div class="a" style="left:207px;top:709px;width:67px;height:16px;background:#c0c0c0"></div>
<div class="t" style="left:209px;top:710px;letter-spacing:0.4px">Control</div>
<svg style="left:1252px;top:709px" width="15" height="15"><rect x="0.5" y="0.5" width="14" height="14" rx="4" fill="#8a877f" stroke="#b8b6b0" stroke-width="1"/><rect x="2.5" y="2.5" width="10" height="10" rx="1" fill="#fff" stroke="#2c303c" stroke-width="1.3"/><rect x="3" y="3" width="9" height="1" fill="#d8dce4"/><rect x="5" y="8.5" width="5" height="2" fill="#2c303c"/></svg>
<div class="a" style="left:206px;top:726px;width:1px;height:215px;background:#000"></div>
<div class="a" style="left:207px;top:726px;width:1066px;height:215px;background:#eeeeee;border-right:1px solid #fff;border-bottom:1px solid #fff"></div>
<div class="a" style="left:207px;top:727px;width:139px;height:136px;border:1px solid #a8a8a8;box-shadow:1px 1px 0 #fff, inset 1px 1px 0 #fff;background:#eeeeee"></div>
<svg style="left:207.1px;top:724.75px" width="140.7" height="140.7" viewBox="0 0 140.7 140.7"><defs><linearGradient id="kg277795" x1="0" y1="0" x2="1" y2="1"><stop offset="0" stop-color="#ffffff"/><stop offset="0.42" stop-color="#e8e8e8"/><stop offset="0.75" stop-color="#c8c8c8"/><stop offset="1" stop-color="#b4b4b4"/></linearGradient><linearGradient id="ks277795" x1="0" y1="0" x2="1" y2="1"><stop offset="0" stop-color="#d4d4d4"/><stop offset="1" stop-color="#fafafa"/></linearGradient><linearGradient id="kd277795" x1="0" y1="0" x2="1" y2="1"><stop offset="0" stop-color="#b8b8b8"/><stop offset="1" stop-color="#f0f0f0"/></linearGradient></defs><line x1="21.22" y1="108.74" x2="17.67" y2="111.51" stroke="#ff0000" stroke-width="1.2"/><line x1="11.16" y1="89.94" x2="6.88" y2="91.35" stroke="#555" stroke-width="1.2"/><line x1="8.02" y1="68.84" x2="3.52" y2="68.73" stroke="#555" stroke-width="1.2"/><line x1="12.17" y1="47.93" x2="7.97" y2="46.31" stroke="#555" stroke-width="1.2"/><line x1="23.13" y1="29.63" x2="19.72" y2="26.70" stroke="#555" stroke-width="1.2"/><line x1="39.61" y1="16.10" x2="37.39" y2="12.19" stroke="#555" stroke-width="1.2"/><line x1="59.69" y1="8.92" x2="58.92" y2="4.48" stroke="#555" stroke-width="1.2"/><line x1="81.01" y1="8.92" x2="81.78" y2="4.48" stroke="#555" stroke-width="1.2"/><line x1="101.09" y1="16.10" x2="103.31" y2="12.19" stroke="#555" stroke-width="1.2"/><line x1="117.57" y1="29.63" x2="120.98" y2="26.70" stroke="#555" stroke-width="1.2"/><line x1="128.53" y1="47.93" x2="132.73" y2="46.31" stroke="#555" stroke-width="1.2"/><line x1="132.68" y1="68.84" x2="137.18" y2="68.73" stroke="#555" stroke-width="1.2"/><line x1="129.54" y1="89.94" x2="133.82" y2="91.35" stroke="#555" stroke-width="1.2"/><line x1="119.48" y1="108.74" x2="123.03" y2="111.51" stroke="#555" stroke-width="1.2"/><circle cx="70.35" cy="70.35" r="62.35" fill="url(#kg277795)" stroke="#3a3a3a" stroke-width="1"/><circle cx="70.35" cy="70.35" r="53.62" fill="#eeeeee" stroke="url(#ks277795)" stroke-width="1.2"/><circle cx="30.56" cy="89.24" r="9.5" fill="url(#kd277795)"/></svg>
<div class="t" style="left:247.45px;top:795.6px;width:60px;text-align:center;letter-spacing:0.2px">5%</div>
<div class="a" style="left:353px;top:727px;width:887px;height:136px;border:1px solid #a8a8a8;box-shadow:1px 1px 0 #fff, inset 1px 1px 0 #fff;background:#eeeeee"></div>
<div class="a" style="left:1247px;top:727px;width:23px;height:136px;border:1px solid #a8a8a8;box-shadow:1px 1px 0 #fff, inset 1px 1px 0 #fff;background:#eeeeee"></div>
<svg style="left:353px;top:727px" width="887" height="136" shape-rendering="crispEdges"><rect x="11" y="134" width="8" height="1" fill="#726f68"/><rect x="11" y="131" width="8" height="1" fill="#726f68"/><rect x="20" y="131" width="8" height="4" fill="#726f68"/><rect x="29" y="133" width="8" height="2" fill="#726f68"/><rect x="29" y="131" width="8" height="1" fill="#726f68"/><rect x="38" y="133" width="8" height="2" fill="#726f68"/><rect x="38" y="127" width="8" height="1" fill="#726f68"/><rect x="47" y="131" width="8" height="4" fill="#726f68"/><rect x="47" y="105" width="8" height="1" fill="#726f68"/><rect x="56" y="134" width="8" height="1" fill="#726f68"/><rect x="65" y="128" width="8" height="7" fill="#726f68"/><rect x="65" y="125" width="8" height="1" fill="#726f68"/><rect x="74" y="131" width="8" height="4" fill="#726f68"/><rect x="74" y="129" width="8" height="1" fill="#726f68"/><rect x="83" y="133" width="8" height="2" fill="#726f68"/><rect x="93" y="132" width="8" height="3" fill="#726f68"/><rect x="102" y="127" width="8" height="8" fill="#726f68"/><rect x="102" y="119" width="8" height="1" fill="#726f68"/><rect x="111" y="111" width="8" height="24" fill="#726f68"/><rect x="111" y="99" width="8" height="1" fill="#726f68"/><rect x="120" y="133" width="8" height="2" fill="#726f68"/><rect x="120" y="120" width="8" height="1" fill="#726f68"/><rect x="129" y="133" width="8" height="2" fill="#726f68"/><rect x="129" y="130" width="8" height="1" fill="#726f68"/><rect x="138" y="134" width="8" height="1" fill="#726f68"/><rect x="138" y="124" width="8" height="1" fill="#726f68"/><rect x="147" y="134" width="8" height="1" fill="#726f68"/><rect x="147" y="131" width="8" height="1" fill="#726f68"/><rect x="156" y="134" width="8" height="1" fill="#726f68"/><rect x="156" y="132" width="8" height="1" fill="#726f68"/><rect x="165" y="134" width="8" height="1" fill="#726f68"/><rect x="165" y="131" width="8" height="1" fill="#726f68"/><rect x="175" y="132" width="8" height="3" fill="#726f68"/><rect x="175" y="129" width="8" height="1" fill="#726f68"/><rect x="184" y="128" width="8" height="7" fill="#726f68"/><rect x="184" y="120" width="8" height="1" fill="#726f68"/><rect x="193" y="131" width="8" height="4" fill="#726f68"/><rect x="193" y="127" width="8" height="1" fill="#726f68"/><rect x="202" y="134" width="8" height="1" fill="#726f68"/><rect x="202" y="132" width="8" height="1" fill="#726f68"/><rect x="211" y="134" width="8" height="1" fill="#726f68"/><rect x="211" y="131" width="8" height="1" fill="#726f68"/><rect x="220" y="131" width="8" height="4" fill="#726f68"/><rect x="220" y="122" width="8" height="1" fill="#726f68"/><rect x="229" y="134" width="8" height="1" fill="#726f68"/><rect x="229" y="132" width="8" height="1" fill="#726f68"/><rect x="238" y="133" width="8" height="2" fill="#726f68"/><rect x="247" y="127" width="8" height="1" fill="#726f68"/><rect x="257" y="134" width="8" height="1" fill="#726f68"/><rect x="257" y="133" width="8" height="1" fill="#726f68"/><rect x="266" y="134" width="8" height="1" fill="#726f68"/><rect x="275" y="134" width="8" height="1" fill="#726f68"/><rect x="284" y="133" width="8" height="1" fill="#726f68"/><rect x="293" y="134" width="8" height="1" fill="#726f68"/><rect x="302" y="132" width="8" height="1" fill="#726f68"/><rect x="311" y="129" width="8" height="1" fill="#726f68"/><rect x="320" y="134" width="8" height="1" fill="#726f68"/><rect x="320" y="132" width="8" height="1" fill="#726f68"/><rect x="329" y="126" width="8" height="9" fill="#726f68"/><rect x="329" y="114" width="8" height="1" fill="#726f68"/><rect x="339" y="132" width="8" height="3" fill="#726f68"/><rect x="339" y="123" width="8" height="1" fill="#726f68"/><rect x="348" y="133" width="8" height="2" fill="#726f68"/><rect x="348" y="131" width="8" height="1" fill="#726f68"/><rect x="357" y="132" width="8" height="1" fill="#726f68"/><rect x="366" y="134" width="8" height="1" fill="#726f68"/><rect x="366" y="117" width="8" height="1" fill="#726f68"/><rect x="375" y="134" width="8" height="1" fill="#726f68"/><rect x="375" y="117" width="8" height="1" fill="#726f68"/><rect x="384" y="134" width="8" height="1" fill="#726f68"/><rect x="384" y="130" width="8" height="1" fill="#726f68"/><rect x="393" y="134" width="8" height="1" fill="#726f68"/><rect x="402" y="134" width="8" height="1" fill="#726f68"/><rect x="421" y="134" width="8" height="1" fill="#726f68"/><rect x="421" y="131" width="8" height="1" fill="#726f68"/><rect x="430" y="133" width="8" height="1" fill="#726f68"/><rect x="439" y="131" width="8" height="4" fill="#726f68"/><rect x="448" y="134" width="8" height="1" fill="#726f68"/><rect x="448" y="128" width="8" height="1" fill="#726f68"/><rect x="457" y="132" width="8" height="1" fill="#726f68"/><rect x="466" y="132" width="8" height="3" fill="#726f68"/><rect x="466" y="129" width="8" height="1" fill="#726f68"/><rect x="475" y="133" width="8" height="2" fill="#726f68"/><rect x="484" y="130" width="8" height="5" fill="#726f68"/><rect x="484" y="125" width="8" height="1" fill="#726f68"/><rect x="494" y="133" width="8" height="2" fill="#726f68"/><rect x="503" y="133" width="8" height="1" fill="#726f68"/><rect x="512" y="133" width="8" height="1" fill="#726f68"/><rect x="521" y="133" width="8" height="1" fill="#726f68"/><rect x="530" y="133" width="8" height="1" fill="#726f68"/><rect x="539" y="134" width="8" height="1" fill="#726f68"/><rect x="548" y="132" width="8" height="1" fill="#726f68"/><rect x="557" y="134" width="8" height="1" fill="#726f68"/><rect x="557" y="132" width="8" height="1" fill="#726f68"/><rect x="566" y="133" width="8" height="1" fill="#726f68"/><rect x="576" y="134" width="8" height="1" fill="#726f68"/><rect x="594" y="133" width="8" height="1" fill="#726f68"/><rect x="603" y="133" width="8" height="1" fill="#726f68"/><rect x="612" y="134" width="8" height="1" fill="#726f68"/><rect x="612" y="131" width="8" height="1" fill="#726f68"/><rect x="621" y="131" width="8" height="1" fill="#726f68"/><rect x="630" y="133" width="8" height="2" fill="#726f68"/><rect x="639" y="134" width="8" height="1" fill="#726f68"/><rect x="648" y="134" width="8" height="1" fill="#726f68"/><rect x="658" y="133" width="8" height="1" fill="#726f68"/><rect x="667" y="133" width="8" height="1" fill="#726f68"/><rect x="676" y="134" width="8" height="1" fill="#726f68"/><rect x="685" y="134" width="8" height="1" fill="#726f68"/><rect x="694" y="134" width="8" height="1" fill="#726f68"/><rect x="703" y="134" width="8" height="1" fill="#726f68"/><rect x="712" y="133" width="8" height="1" fill="#726f68"/><rect x="721" y="134" width="8" height="1" fill="#726f68"/><rect x="731" y="134" width="8" height="1" fill="#726f68"/><rect x="740" y="134" width="8" height="1" fill="#726f68"/><rect x="749" y="133" width="8" height="1" fill="#726f68"/><rect x="758" y="134" width="8" height="1" fill="#726f68"/><rect x="758" y="130" width="8" height="1" fill="#726f68"/><rect x="767" y="134" width="8" height="1" fill="#726f68"/><rect x="776" y="134" width="8" height="1" fill="#726f68"/><rect x="794" y="133" width="8" height="2" fill="#726f68"/><rect x="803" y="134" width="8" height="1" fill="#726f68"/><rect x="822" y="134" width="8" height="1" fill="#726f68"/><rect x="822" y="132" width="8" height="1" fill="#726f68"/><rect x="831" y="134" width="8" height="1" fill="#726f68"/><rect x="840" y="133" width="8" height="1" fill="#726f68"/><rect x="849" y="133" width="8" height="1" fill="#726f68"/><rect x="858" y="134" width="8" height="1" fill="#726f68"/><rect x="867" y="133" width="8" height="1" fill="#726f68"/><rect x="876" y="134" width="8" height="1" fill="#726f68"/></svg>
<div class="t" style="left:1251px;top:730px;letter-spacing:0.2px">VU</div>
<div class="a" style="left:1249px;top:784px;width:9px;height:64px;background:linear-gradient(#c8c040,#a8a040 10%,#726f68 25%)"></div>
<div class="a" style="left:1259px;top:791px;width:9px;height:57px;background:linear-gradient(#8a8450,#726f68 20%)"></div>
<div class="a" style="left:1249px;top:774px;width:9px;height:1px;background:#726f68"></div>
<div class="a" style="left:1259px;top:782px;width:9px;height:1px;background:#726f68"></div>
<div class="t" style="left:1251px;top:848px;letter-spacing:0px">L</div>
<div class="t" style="left:1261px;top:848px;letter-spacing:0px">R</div>
<div class="a" style="left:207px;top:870px;width:139px;height:29px;border:1px solid #a8a8a8;box-shadow:1px 1px 0 #fff, inset 1px 1px 0 #fff;background:#eeeeee"></div>
<div class="a" style="left:211px;top:874px;width:30px;height:22px;border:1px solid #8c8c8c;border-radius:4px;background:linear-gradient(#fcfcfc,#e0e0e0)"><svg style="left:8px;top:3px" width="14" height="13"><path d="M7 1 L1 6.5 L7 12Z M13 1 L7 6.5 L13 12Z" fill="#48a8f0" stroke="#3088d0" stroke-width="0.8"/></svg></div>
<div class="a" style="left:245px;top:874px;width:30px;height:22px;border:1px solid #8c8c8c;border-radius:4px;background:linear-gradient(#fcfcfc,#e0e0e0)"><svg style="left:9px;top:3px" width="12" height="13"><rect x="1" y="1" width="10.5" height="10.5" fill="#48a8f0" stroke="#3088d0" stroke-width="0.8"/></svg></div>
<div class="a" style="left:279px;top:874px;width:30px;height:22px;border:1px solid #8c8c8c;border-radius:4px;background:linear-gradient(#fcfcfc,#e0e0e0)"><svg style="left:9px;top:3px" width="12" height="13"><rect x="1" y="1" width="3.5" height="11" fill="#48a8f0" stroke="#3088d0" stroke-width="0.7"/><rect x="7" y="1" width="3.5" height="11" fill="#48a8f0" stroke="#3088d0" stroke-width="0.7"/></svg></div>
<div class="a" style="left:313px;top:874px;width:30px;height:22px;border:1px solid #8c8c8c;border-radius:4px;background:linear-gradient(#fcfcfc,#e0e0e0)"><svg style="left:8px;top:3px" width="14" height="13"><path d="M1 1 L7 6.5 L1 12Z M7 1 L13 6.5 L7 12Z" fill="#48a8f0" stroke="#3088d0" stroke-width="0.8"/></svg></div>
<div class="a" style="left:353px;top:870px;width:241px;height:29px;border:1px solid #a8a8a8;box-shadow:1px 1px 0 #fff, inset 1px 1px 0 #fff;background:#eeeeee"></div>
<div class="a" style="left:358px;top:874px;width:55px;height:22px;border:1px solid #8c8c8c;border-radius:4px;background:linear-gradient(#fcfcfc,#e0e0e0)"><svg style="left:17px;top:3px" width="20" height="15"><path d="M1 3.5 L5 3.5 L11 11 L14 11 M1 11 L5 11 L11 3.5 L14 3.5" stroke="#8a8a8a" stroke-width="3" fill="none"/><path d="M13 0 L18 3.5 L13 7Z M13 7.5 L18 11 L13 14.5Z" fill="#8a8a8a"/></svg></div>
<div class="a" style="left:417px;top:874px;width:55px;height:22px;border:1px solid #8c8c8c;border-radius:4px;background:linear-gradient(#fcfcfc,#e0e0e0)"><svg style="left:19px;top:2px" width="17" height="17"><rect x="2" y="2.5" width="13" height="10" rx="3" fill="none" stroke="#2a88e0" stroke-width="2.6"/><rect x="2" y="2.5" width="13" height="10" rx="3" fill="none" stroke="#9ad0fa" stroke-width="0.8"/><path d="M11 9.5 L6.5 12.5 L11 15.5Z" fill="#2a88e0"/></svg></div>
<div class="a" style="left:476px;top:874px;width:55px;height:22px;border:1px solid #8c8c8c;border-radius:4px;background:linear-gradient(#fcfcfc,#e0e0e0)"><svg style="left:19px;top:2px" width="17" height="17"><path d="M3.5 9 A5.5 5.5 0 0 1 13 5.5 M13.5 8.5 A5.5 5.5 0 0 1 4.5 12" stroke="#8a8a8a" stroke-width="2.6" fill="none"/><circle cx="5" cy="4.5" r="3" fill="#8a8a8a"/><path d="M10.5 3 L15 6.5 L15.5 2Z M7 10 L8 15.5 L3.5 13Z" fill="#8a8a8a"/></svg></div>
<div class="a" style="left:535px;top:874px;width:55px;height:22px;border:1px solid #8c8c8c;border-radius:4px;background:linear-gradient(#fcfcfc,#e0e0e0)"><svg style="left:20px;top:4px" width="15" height="13"><path d="M1 6.5 L8 6.5" stroke="#8a8a8a" stroke-width="3"/><path d="M7 1 L13.5 6.5 L7 12Z" fill="#8a8a8a"/></svg></div>
<div class="a" style="left:601px;top:870px;width:670px;height:29px;border:1px solid #a8a8a8;box-shadow:1px 1px 0 #fff, inset 1px 1px 0 #fff;background:#eeeeee"></div>
<div class="a" style="left:605px;top:880px;width:578px;height:10px;border:1px solid #8c8c8c;border-radius:5px;background:linear-gradient(#fafafa,#e4e4e4);box-shadow:inset 0 1px 1px #ccc"></div>
<div class="a" style="left:607px;top:882px;width:68px;height:6px;border:1px solid #8c8c8c;border-right:none;border-radius:3px 0 0 3px;background:linear-gradient(#fcfcfc,#ececec)"></div>
<div class="a" style="left:672px;top:875px;width:9px;height:19px;border:1px solid #8c8c8c;border-radius:3px;background:linear-gradient(#fcfcfc,#dedede)"></div>
<div class="t" style="left:1185.5px;top:878px;font-weight:bold;letter-spacing:1.12px">01:05 / 09:20</div>
<div class="a" style="left:207px;top:906px;width:1064px;height:33px;border:1px solid #a8a8a8;box-shadow:1px 1px 0 #fff, inset 1px 1px 0 #fff;background:#eeeeee"></div>
<div class="t" style="left:209.5px;top:915px;font-weight:bold;letter-spacing:0.88px">Stairway To Heaven - Heart</div>
<div class="t" style="left:1000px;top:915px;width:270px;text-align:right;font-weight:bold;letter-spacing:1.15px">Stereo (44100.0)</div>
<svg style="left:8px;top:806px;overflow:hidden" width="191" height="133" viewBox="0 0 192 133" preserveAspectRatio="none"><defs><linearGradient id="bandv" x1="0" y1="0" x2="0" y2="1"><stop offset="0" stop-color="#140a20" stop-opacity="0"/><stop offset="0.3" stop-color="#2a2080"/><stop offset="0.75" stop-color="#3a30a0"/><stop offset="1" stop-color="#201858"/></linearGradient><radialGradient id="bandr" cx="0.5" cy="0.5" r="0.5"><stop offset="0" stop-color="#5040c0"/><stop offset="0.65" stop-color="#3a2c98"/><stop offset="1" stop-color="#1a1040" stop-opacity="0"/></radialGradient><radialGradient id="warm" cx="0.5" cy="0.5" r="0.5"><stop offset="0" stop-color="#b07060" stop-opacity="0.8"/><stop offset="1" stop-color="#402040" stop-opacity="0"/></radialGradient><linearGradient id="logo" x1="0" y1="0" x2="0" y2="1"><stop offset="0" stop-color="#4a88ff"/><stop offset="0.5" stop-color="#1a50d8"/><stop offset="1" stop-color="#0c2ea0"/></linearGradient></defs><rect width="192" height="133" fill="#07030a"/><rect x="7" y="56" width="180" height="44" fill="url(#bandv)"/><ellipse cx="98" cy="80" rx="90" ry="22" fill="url(#bandr)"/><path d="M66.7 65.7 Q71.9 58.5 75.7 55.5" stroke="#6a6aff" stroke-opacity="0.55" stroke-width="1.3" fill="none"/><path d="M20.1 79.3 Q-2.3 71.9 -7.6 77.7" stroke="#6a6aff" stroke-opacity="0.55" stroke-width="1.3" fill="none"/><path d="M84.3 91.4 Q75.6 95.3 61.7 84.8" stroke="#6a6aff" stroke-opacity="0.55" stroke-width="1.3" fill="none"/><path d="M111.0 75.1 Q132.5 66.3 139.6 64.2" stroke="#6a6aff" stroke-opacity="0.55" stroke-width="1.3" fill="none"/><path d="M35.2 64.5 Q23.1 69.6 23.8 72.1" stroke="#6a6aff" stroke-opacity="0.55" stroke-width="1.3" fill="none"/><path d="M121.8 74.2 Q114.4 64.2 124.7 63.7" stroke="#6a6aff" stroke-opacity="0.55" stroke-width="1.3" fill="none"/><path d="M129.1 76.2 Q122.6 74.1 117.9 78.3" stroke="#6a6aff" stroke-opacity="0.55" stroke-width="1.3" fill="none"/><path d="M149.0 86.6 Q141.8 93.5 133.7 88.3" stroke="#6a6aff" stroke-opacity="0.55" stroke-width="1.3" fill="none"/><path d="M137.7 70.9 Q150.4 70.5 166.5 61.8" stroke="#6a6aff" stroke-opacity="0.55" stroke-width="1.3" fill="none"/><path d="M36.6 78.6 Q28.1 81.8 8.9 82.6" stroke="#6a6aff" stroke-opacity="0.55" stroke-width="1.3" fill="none"/><path d="M163.2 71.9 Q170.7 72.4 174.9 74.2" stroke="#6a6aff" stroke-opacity="0.55" stroke-width="1.3" fill="none"/><path d="M157.0 95.9 Q147.4 101.1 155.4 99.8" stroke="#6a6aff" stroke-opacity="0.55" stroke-width="1.3" fill="none"/><path d="M123.2 97.7 Q130.6 97.9 142.6 92.6" stroke="#6a6aff" stroke-opacity="0.55" stroke-width="1.3" fill="none"/><path d="M13.9 77.5 Q-4.8 77.2 -6.0 68.4" stroke="#6a6aff" stroke-opacity="0.55" stroke-width="1.3" fill="none"/><path d="M32.6 69.4 Q21.0 73.1 26.1 78.3" stroke="#6a6aff" stroke-opacity="0.55" stroke-width="1.3" fill="none"/><path d="M106.2 93.6 Q111.3 96.6 125.3 102.3" stroke="#6a6aff" stroke-opacity="0.55" stroke-width="1.3" fill="none"/><path d="M72.8 93.6 Q80.0 85.1 100.2 85.2" stroke="#6a6aff" stroke-opacity="0.55" stroke-width="1.3" fill="none"/><path d="M50.8 78.4 Q43.6 74.3 56.2 72.7" stroke="#6a6aff" stroke-opacity="0.55" stroke-width="1.3" fill="none"/><path d="M74.6 81.5 Q88.5 85.7 101.8 86.1" stroke="#6a6aff" stroke-opacity="0.55" stroke-width="1.3" fill="none"/><path d="M128.3 62.1 Q147.8 70.2 152.3 68.8" stroke="#6a6aff" stroke-opacity="0.55" stroke-width="1.3" fill="none"/><path d="M78.7 75.2 Q58.0 69.9 54.9 78.4" stroke="#6a6aff" stroke-opacity="0.55" stroke-width="1.3" fill="none"/><path d="M46.5 66.2 Q31.7 55.2 36.9 55.4" stroke="#6a6aff" stroke-opacity="0.55" stroke-width="1.3" fill="none"/><path d="M27.8 73.8 Q15.8 72.7 -0.7 82.8" stroke="#6a6aff" stroke-opacity="0.55" stroke-width="1.3" fill="none"/><path d="M54.1 73.2 Q57.0 76.6 46.0 64.1" stroke="#6a6aff" stroke-opacity="0.55" stroke-width="1.3" fill="none"/><path d="M91.5 78.4 Q76.0 69.8 66.7 68.8" stroke="#6a6aff" stroke-opacity="0.55" stroke-width="1.3" fill="none"/><path d="M155.0 66.1 Q141.3 65.9 126.4 77.0" stroke="#6a6aff" stroke-opacity="0.55" stroke-width="1.3" fill="none"/><ellipse cx="98" cy="88" rx="55" ry="14" fill="url(#warm)"/><rect x="7" y="97" width="180" height="22" fill="#120e20"/><rect x="20" y="99" width="160" height="2" fill="#3a3450"/><rect x="10" y="108" width="172" height="2" fill="#2a2440" opacity="0.8"/><rect x="9" y="112" width="30" height="6" fill="#2030a0" opacity="0.3"/><ellipse cx="35" cy="34" rx="25" ry="19" transform="rotate(-8 35 34)" fill="url(#logo)" stroke="#a8d0ff" stroke-width="1.4"/><ellipse cx="35" cy="34" rx="21" ry="15" transform="rotate(-8 35 34)" fill="none" stroke="#000" stroke-width="0.8"/><path d="M25 31 Q27 24 35 29 Q43 24 46 30 Q44 38 36 42 Q27 38 25 31Z" fill="#1040c0" stroke="#b0d4ff" stroke-width="1"/><ellipse cx="163" cy="35" rx="25" ry="16" transform="rotate(-6 163 35)" fill="url(#logo)" stroke="#a8d0ff" stroke-width="1.4"/><ellipse cx="165" cy="35" rx="15" ry="8" transform="rotate(-6 165 35)" fill="#0a1030" stroke="#b0d4ff" stroke-width="1"/><path d="M64 15 L130 13 Q146 13 148 20" stroke="#a8d0ff" stroke-width="4.5" fill="none"/><path d="M64 15 L130 13 Q146 13 148 20" stroke="#2a68f0" stroke-width="2.5" fill="none"/><text x="58" y="50" font-family="Liberation Serif" font-style="italic" font-weight="bold" font-size="43" fill="url(#logo)" stroke="#b8dcff" stroke-width="1.3" letter-spacing="-1.5">Heart</text><text x="56" y="63" font-family="Liberation Serif" font-style="italic" font-size="15" fill="#501010" stroke="#d03838" stroke-width="0.8">&amp; Friends</text><circle cx="19" cy="89" r="7" fill="none" stroke="#3a50ff" stroke-width="2.5"/><path d="M19 82 L19 96 M14 91 L19 88 L24 91" stroke="#5a70ff" stroke-width="1.5"/><rect x="46" y="78" width="22" height="15" fill="#5a3020" opacity="0.6"/><path d="M50 80 L50 94 M54 80 L54 94 M58 78 L58 94 M62 80 L62 94 M66 80 L66 94 M47 93 L69 93" stroke="#f0a040" stroke-width="1.6"/><path d="M97 74 L88 96 L106 96Z" fill="#30a030"/><path d="M97 78 L91 92 L103 92Z" fill="#70e060" opacity="0.6"/><circle cx="97" cy="75" r="1.5" fill="#ffe080"/><circle cx="135" cy="88" r="9" fill="#b89030"/><path d="M135 79 A4.5 4.5 0 0 1 135 88 A4.5 4.5 0 0 0 135 97 A9 9 0 0 1 135 79Z" fill="#604020"/><path d="M118 96 L124 86 L128 96Z" fill="#e0b050" opacity="0.8"/><rect x="162" y="80" width="22" height="15" rx="5" fill="none" stroke="#b050f0" stroke-width="2.5"/><circle cx="170" cy="87" r="3" fill="#e060e0"/><text x="52" y="126" font-family="Liberation Serif" font-style="italic" font-size="9" fill="#30b0a8">Home For The Holidays</text></svg>
<div class="a" style="left:378.5px;top:381px;width:1.5px;height:1.5px;background:#c8c8c8"></div>
<div class="a" style="left:378.5px;top:386px;width:1.5px;height:1.5px;background:#8a8a8a"></div>
<div class="a" style="left:378.5px;top:391px;width:1.5px;height:1.5px;background:#8a8a8a"></div>
<div class="a" style="left:378.5px;top:396px;width:1.5px;height:1.5px;background:#8a8a8a"></div>
<div class="a" style="left:378.5px;top:401px;width:1.5px;height:1.5px;background:#8a8a8a"></div>
<div class="a" style="left:378.5px;top:406px;width:1.5px;height:1.5px;background:#8a8a8a"></div>
<div class="a" style="left:378.5px;top:411px;width:1.5px;height:1.5px;background:#8a8a8a"></div>
<div class="a" style="left:378.5px;top:416px;width:1.5px;height:1.5px;background:#8a8a8a"></div>
<div class="a" style="left:378.5px;top:421px;width:1.5px;height:1.5px;background:#8a8a8a"></div>
<div class="a" style="left:378.5px;top:426px;width:1.5px;height:1.5px;background:#8a8a8a"></div>
<div class="a" style="left:378.5px;top:431px;width:1.5px;height:1.5px;background:#c8c8c8"></div>
</body></html>
